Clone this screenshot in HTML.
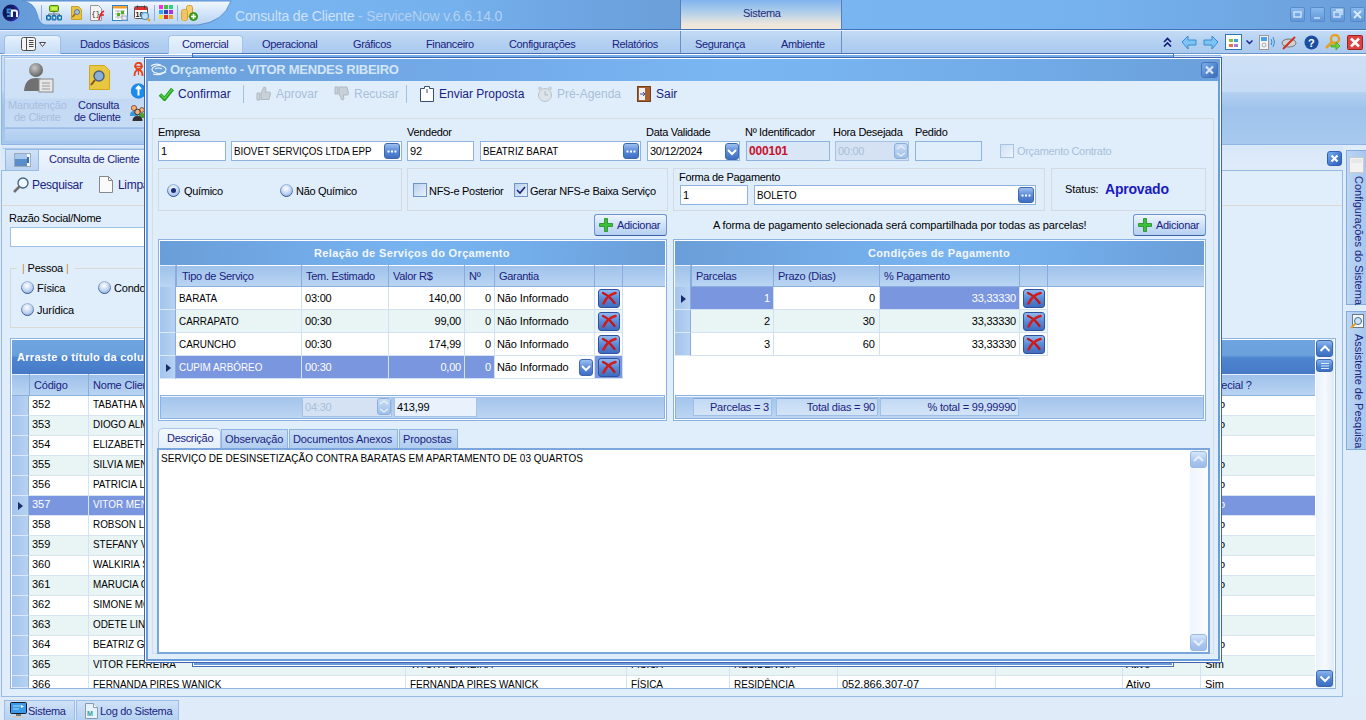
<!DOCTYPE html><html><head><meta charset="utf-8"><style>
*{box-sizing:border-box;margin:0;padding:0}
html,body{width:1366px;height:720px;overflow:hidden;background:#dfebf9;font-family:"Liberation Sans",sans-serif;font-size:11px;color:#000}
.a{position:absolute}
.t{position:absolute;white-space:nowrap;line-height:13px}
.nb{color:#19227e}
.up{letter-spacing:-0.6px}
.inp{position:absolute;background:#fff;border:1px solid #8db2e3}
.ell{position:absolute;width:16px;height:16px;border-radius:3px;background:linear-gradient(#8fb6ee,#4d7fd0 55%,#3a6cc0);border:1px solid #3f68b0}
.ell:after{content:"";position:absolute;left:3px;top:6px;width:2px;height:2px;background:#fff;box-shadow:3px 0 #fff,6px 0 #fff}
.grp{position:absolute;border:1px solid #d3dbe4}
.gh{position:absolute;background:linear-gradient(90deg,#6c9fd8 0%,#7ab6f0 45%,#78b3ee 60%,#6a9ed8 100%)}
.ch{position:absolute;background:linear-gradient(#9dc0ea,#b8d3f2);color:#19227e}
.ind{position:absolute;background:linear-gradient(90deg,#a8c7ee,#b6d1f2);border-bottom:1px solid #d8e6f6;border-right:1px solid #87abdc}
.del{position:absolute;width:22px;height:19px;border-radius:3px;background:linear-gradient(#7fa8e6,#4475c4);border:1px solid #3462ad}
.cell{position:absolute;white-space:nowrap;line-height:13px;overflow:hidden}
</style></head><body>
<div class="a" style="left:0px;top:0px;width:1366px;height:29px;background:linear-gradient(90deg,#6398d5 0%,#70aae8 10%,#78b5f1 17%,#75b1ed 33%,#6ea5e2 42%,#6a9fd9 49.8%,#78b5f1 61.6%,#76b2ee 80%,#6a9fdb 100%)"></div>
<div class="a" style="left:0px;top:29px;width:1366px;height:1px;background:#3f72b8"></div>
<div class="a" style="left:0px;top:30px;width:1366px;height:1px;background:#e9f2fc"></div>
<svg class="a" style="left:0;top:0" width="240" height="29"><defs><linearGradient id="qg" x1="0" y1="0" x2="0" y2="1"><stop offset="0" stop-color="#f2f8fe"/><stop offset="0.45" stop-color="#d6e7fa"/><stop offset="1" stop-color="#b6d3f4"/></linearGradient></defs><path d="M22 1 Q34 2 37 14 Q39 24 45 25 L198 25 Q224 22 231 1 Z" fill="url(#qg)" stroke="#5d8fd0" stroke-width="1"/></svg>
<svg class="a" style="left:2px;top:4px" width="18" height="18"><defs><radialGradient id="lg" cx="0.35" cy="0.45" r="0.65"><stop offset="0" stop-color="#0a1040"/><stop offset="0.7" stop-color="#161e70"/><stop offset="1" stop-color="#3a3ad0"/></radialGradient></defs><circle cx="9" cy="9" r="8.5" fill="url(#lg)"/><path d="M9 5.5H5.5v3h3v3.5H5" stroke="#3a8ad8" stroke-width="1.8" fill="none"/><path d="M10 13V6.5h3q2 0 2 2V13" stroke="#f4f4ff" stroke-width="2" fill="none"/></svg>
<div class="a" style="left:41px;top:5px;width:1px;height:16px;background:#8fb0da"></div>
<svg class="a" style="left:46px;top:5px" width="16" height="16" viewBox="0 0 16 16"><rect x="3.5" y="0.5" width="9" height="6" rx="1" fill="#a0d820" stroke="#4a8a10"/><rect x="5" y="2" width="6" height="3" fill="#c8f060"/><path d="M8 7v2M2.5 11V9h11v2M8 9v2" stroke="#707878" fill="none"/><rect x="0.5" y="10.5" width="4" height="4.5" rx="0.5" fill="#3a9ad8" stroke="#1a6aa8"/><rect x="6" y="10.5" width="4" height="4.5" rx="0.5" fill="#3a9ad8" stroke="#1a6aa8"/><rect x="11.5" y="10.5" width="4" height="4.5" rx="0.5" fill="#3a9ad8" stroke="#1a6aa8"/><rect x="2" y="12" width="1.5" height="1.5" fill="#fff"/><rect x="7.5" y="12" width="1.5" height="1.5" fill="#fff"/><rect x="13" y="12" width="1.5" height="1.5" fill="#fff"/></svg>
<svg class="a" style="left:71px;top:6px" width="11" height="14" viewBox="0 0 11 14"><path d="M0.5 0.5h7l3 3v10h-10z" fill="#e6c440" stroke="#c8a028"/><circle cx="6" cy="6" r="2.5" fill="#a8c0d8" stroke="#607890"/><path d="M4 8l-2.5 3" stroke="#a06020" stroke-width="1.5"/></svg>
<svg class="a" style="left:89px;top:5px" width="18" height="16" viewBox="0 0 18 16"><path d="M1.5 0.5h8l3 3v12h-11z" fill="#f4f4f4" stroke="#999"/><text x="2.5" y="11" font-size="7" fill="#222" font-family="Liberation Mono">{}</text><path d="M10 15 Q11 8 15 6M11 10h4" stroke="#e02020" stroke-width="1.6" fill="none"/></svg>
<svg class="a" style="left:112px;top:5px" width="16" height="16" viewBox="0 0 16 16"><rect x="0.5" y="0.5" width="15" height="15" fill="#fff" stroke="#2f86c8"/><rect x="1" y="1" width="14" height="2.5" fill="#f7a030"/><path d="M3 6h10M3 9h10M3 12h10M6 5v9M10 5v9" stroke="#b8b8b8"/><rect x="5" y="8" width="3" height="3" fill="#50b020"/><rect x="9" y="6" width="3" height="3" fill="#50b020"/><rect x="10" y="11" width="5" height="4" fill="#e8eef4" stroke="#9ab"/></svg>
<svg class="a" style="left:134px;top:5px" width="17" height="17" viewBox="0 0 17 17"><rect x="0.5" y="1.5" width="13" height="12" rx="1" fill="#fff" stroke="#555"/><rect x="1" y="2" width="12" height="3" fill="#e03030"/><path d="M3.5 0.5v3M10.5 0.5v3" stroke="#444"/><text x="1.5" y="12" font-size="7" fill="#111" font-family="Liberation Sans" font-weight="bold">10</text><circle cx="11" cy="11" r="3.5" fill="#bfe0f8" stroke="#4a90c8" stroke-width="1.2"/><path d="M13.5 13.5l2.5 2.5" stroke="#e8a020" stroke-width="2"/></svg>
<div class="a" style="left:154px;top:5px;width:1px;height:16px;background:#8fb0da"></div>
<svg class="a" style="left:159px;top:5px" width="14" height="14" viewBox="0 0 14 14"><rect x="0" y="0" width="4" height="4" fill="#f030e0"/><rect x="5" y="0" width="4" height="4" fill="#40c040"/><rect x="10" y="0" width="4" height="4" fill="#30d080"/><rect x="0" y="5" width="4" height="4" fill="#30a8f0"/><rect x="5" y="5" width="4" height="4" fill="#3040c0"/><rect x="10" y="5" width="4" height="4" fill="#b030e0"/><rect x="0" y="10" width="4" height="4" fill="#f0e020"/><rect x="5" y="10" width="4" height="4" fill="#e03030"/><rect x="10" y="10" width="4" height="4" fill="#f0a020"/></svg>
<div class="a" style="left:177px;top:5px;width:1px;height:16px;background:#8fb0da"></div>
<svg class="a" style="left:181px;top:5px" width="17" height="16" viewBox="0 0 17 16"><rect x="5.5" y="0.5" width="6" height="11" rx="2" fill="#f8d070" stroke="#d8a030"/><rect x="0.5" y="4.5" width="6" height="11" rx="2" fill="#f8d070" stroke="#d8a030"/><path d="M1 7h5M1 9h5M1 11h5M1 13h5" stroke="#e0b050" stroke-width="0.7"/><circle cx="12.5" cy="11.5" r="4" fill="#40a820" stroke="#2a7810" stroke-width="0.8"/><path d="M12.5 9v5M10 11.5h5" stroke="#fff" stroke-width="1.6"/></svg>
<div class="t" style="left:235px;top:8px;font-size:14px;line-height:16px;color:#cfe2f8;letter-spacing:-0.15px">Consulta de Cliente<span style='color:#b2d0f2'> - ServiceNow v.6.6.14.0</span></div>
<div class="a" style="left:680px;top:0px;width:162px;height:29px;background:linear-gradient(#80b4ee 0%,#b4d0ea 45%,#e8e4dc 80%,#f5e8d8 100%);border-left:1px solid #5a7fb8;border-right:1px solid #5a7fb8"></div>
<div class="t" style="left:743px;top:7px;color:#1e2a7a;letter-spacing:-0.3px">Sistema</div>
<div class="a" style="left:1290px;top:7px;width:15px;height:15px;border-radius:2px;background:linear-gradient(#8dbdf2,#5f96d8);border:1px solid #5886c6;opacity:0.85"></div>
<div class="a" style="left:1310px;top:7px;width:15px;height:15px;border-radius:2px;background:linear-gradient(#8dbdf2,#5f96d8);border:1px solid #5886c6;opacity:0.85"></div>
<div class="a" style="left:1330px;top:7px;width:15px;height:15px;border-radius:2px;background:linear-gradient(#8dbdf2,#5f96d8);border:1px solid #5886c6;opacity:0.85"></div>
<div class="a" style="left:1350px;top:7px;width:15px;height:15px;border-radius:2px;background:linear-gradient(#8dbdf2,#5f96d8);border:1px solid #5886c6;opacity:0.85"></div>
<svg class="a" style="left:1290px;top:7px" width="75" height="15"><g stroke="#dbe9fa" stroke-width="1.3" fill="none"><rect x="4" y="5" width="7" height="5"/><path d="M24 11h6"/><rect x="44" y="5" width="6" height="5"/><path d="M46 3h6v5"/><path d="M64 4l7 7M71 4l-7 7" stroke-width="1.8"/></g></svg>
<div class="a" style="left:0px;top:31px;width:1366px;height:23px;background:linear-gradient(#c4dbf5 0%,#b3d0f1 50%,#a9c9ee 100%)"></div>
<div class="a" style="left:0px;top:53px;width:1366px;height:1px;background:#6a96d0"></div>
<div class="a" style="left:4px;top:35px;width:57px;height:19px;border-radius:4px 4px 0 0;background:linear-gradient(#e6f1fc,#c6ddf6);border:1px solid #9ebfe8;border-bottom:none"></div>
<svg class="a" style="left:21px;top:37px" width="16" height="14" viewBox="0 0 16 14"><rect x="0.5" y="0.5" width="14" height="13" rx="2" fill="#f4f4f4" stroke="#505050"/><path d="M5.5 1v12" stroke="#505050"/><path d="M8 3.5h4.5M8 5.5h4.5M8 7.5h4.5M8 9.5h4.5" stroke="#333" stroke-width="0.9"/></svg>
<svg class="a" style="left:39px;top:42px" width="7" height="5" viewBox="0 0 7 5"><path d="M0.5 0.5h6l-3 4z" fill="#fff" stroke="#445"/></svg>
<div class="a" style="left:168px;top:35px;width:75px;height:20px;border-radius:4px 4px 0 0;background:linear-gradient(#e8f2fc,#d3e5f8);border:1px solid #a4c3ea;border-bottom:none"></div>
<div class="t" style="left:80px;top:38px;color:#19227e;letter-spacing:-0.35px">Dados Básicos</div>
<div class="t" style="left:182px;top:38px;color:#19227e;letter-spacing:-0.35px">Comercial</div>
<div class="t" style="left:262px;top:38px;color:#19227e;letter-spacing:-0.35px">Operacional</div>
<div class="t" style="left:353px;top:38px;color:#19227e;letter-spacing:-0.35px">Gráficos</div>
<div class="t" style="left:426px;top:38px;color:#19227e;letter-spacing:-0.35px">Financeiro</div>
<div class="t" style="left:509px;top:38px;color:#19227e;letter-spacing:-0.35px">Configurações</div>
<div class="t" style="left:612px;top:38px;color:#19227e;letter-spacing:-0.35px">Relatórios</div>
<div class="t" style="left:695px;top:38px;color:#19227e;letter-spacing:-0.35px">Segurança</div>
<div class="t" style="left:781px;top:38px;color:#19227e;letter-spacing:-0.35px">Ambiente</div>
<div class="a" style="left:680px;top:31px;width:1px;height:22px;background:#6b8fc4"></div>
<div class="a" style="left:841px;top:31px;width:1px;height:22px;background:#6b8fc4"></div>
<svg class="a" style="left:1163px;top:37px" width="9" height="10" viewBox="0 0 9 10"><path d="M1 5l3.5-3.5L8 5M1 9.5L4.5 6 8 9.5" stroke="#101a7a" stroke-width="1.6" fill="none"/></svg>
<svg class="a" style="left:1181px;top:35px" width="16" height="15" viewBox="0 0 16 15"><path d="M1 7l6-6v4h8v5H7v4z" fill="#7cc4f4" stroke="#3a8ad0"/></svg>
<svg class="a" style="left:1203px;top:35px" width="16" height="15" viewBox="0 0 16 15"><path d="M15 7l-6-6v4H1v5h8v4z" fill="#7cc4f4" stroke="#3a8ad0"/></svg>
<svg class="a" style="left:1225px;top:34px" width="17" height="16" viewBox="0 0 17 16"><rect x="0.5" y="0.5" width="16" height="15" fill="#fff" stroke="#2c78b8"/><rect x="4" y="5" width="4" height="3" fill="#8ac040"/><rect x="9" y="5" width="4" height="3" fill="#40a0e0"/><rect x="4" y="10" width="4" height="3" fill="#f07040"/><rect x="9" y="10" width="4" height="3" fill="#a080e0"/></svg>
<svg class="a" style="left:1246px;top:40px" width="7" height="5" viewBox="0 0 7 5"><path d="M0.5 0.5l3 3 3-3" stroke="#1a2a8a" stroke-width="1.5" fill="none"/></svg>
<svg class="a" style="left:1259px;top:35px" width="17" height="15" viewBox="0 0 17 15"><rect x="0.5" y="0.5" width="9" height="14" fill="#f4f4f4" stroke="#999"/><rect x="2" y="2" width="6" height="4" fill="#4aa0f0"/><circle cx="5" cy="10" r="2" fill="none" stroke="#aaa"/><path d="M12 4q2 3 0 6M14 2q3 5 0 10" stroke="#3a8ad0" fill="none"/></svg>
<svg class="a" style="left:1281px;top:36px" width="16" height="14" viewBox="0 0 16 14"><ellipse cx="8" cy="7" rx="7" ry="4" fill="#d0d0d0" stroke="#777"/><path d="M2 13L14 1" stroke="#d03020" stroke-width="2"/></svg>
<svg class="a" style="left:1304px;top:35px" width="15" height="15" viewBox="0 0 15 15"><circle cx="7.5" cy="7.5" r="7" fill="#1c4ea0"/><text x="4" y="12" font-size="11" font-weight="bold" fill="#fff" font-family="Liberation Sans">?</text></svg>
<svg class="a" style="left:1325px;top:34px" width="16" height="16" viewBox="0 0 16 16"><circle cx="10" cy="5" r="4" fill="none" stroke="#e8a020" stroke-width="2.5"/><path d="M7 8l-6 6" stroke="#e8a020" stroke-width="2.5"/><path d="M6 11h5V8l4 4-4 4v-3H6z" fill="#70d030" stroke="#40a010" stroke-width="0.7"/></svg>
<svg class="a" style="left:1347px;top:35px" width="16" height="15" viewBox="0 0 16 15"><rect x="0.5" y="0.5" width="15" height="14" rx="1" fill="#e04040" stroke="#a02020"/><path d="M4 3.5l8 8M12 3.5l-8 8" stroke="#fff" stroke-width="2.5"/></svg>
<div class="a" style="left:0px;top:54px;width:1366px;height:92px;background:#dfebf9"></div>
<div class="a" style="left:0px;top:54px;width:1366px;height:1px;background:#fff"></div>
<div class="a" style="left:1px;top:55px;width:1365px;height:90px;background:linear-gradient(#cde0f6 0%,#c6dbf4 40%,#b2cff1 42%,#a8c9ee 52%,#9fc3ec 60%,#a7c9ee 100%);border:1px solid #8db4e4;border-right:none"></div>
<div class="a" style="left:4px;top:57px;width:600px;height:71px;background:linear-gradient(#d2e3f7 0%,#cde0f6 58%,#c3d9f3 60%,#c6dbf4 100%);border:1px solid #a6c5ec;border-right:none"></div>
<div class="a" style="left:5px;top:58px;width:599px;height:1px;background:#f2f8fe"></div>
<div class="a" style="left:4px;top:128px;width:600px;height:14px;background:linear-gradient(#bcd5f2,#b0cef0);border:1px solid #a6c5ec;border-top:1px solid #9cbde8;border-right:none"></div>
<div class="a" style="left:1221px;top:55px;width:145px;height:1px;background:#f4f8fd"></div>
<svg class="a" style="left:24px;top:62px" width="30" height="31" viewBox="0 0 30 31"><defs><radialGradient id="hd" cx="0.4" cy="0.35" r="0.6"><stop offset="0" stop-color="#c8c8c8"/><stop offset="1" stop-color="#6a6a6a"/></radialGradient></defs><circle cx="12" cy="8" r="7" fill="url(#hd)"/><path d="M0 29 Q1 16 12 16 Q22 16 24 24 L24 29z" fill="#707070"/><rect x="15" y="17" width="14" height="13" fill="#e6e6e6" stroke="#8a8a8a"/><path d="M18 21h8M18 24h8M18 27h8" stroke="#9a9a9a"/></svg>
<div class="t" style="left:8px;top:99px;color:#a8bedf;letter-spacing:-0.2px">Manutenção</div>
<div class="t" style="left:14px;top:111px;color:#a8bedf;letter-spacing:-0.3px">de Cliente</div>
<svg class="a" style="left:89px;top:65px" width="21" height="25" viewBox="0 0 21 25"><path d="M0.5 0.5h15l5 5v19h-20z" fill="#e8c840" stroke="#d0a820"/><circle cx="10" cy="11" r="5" fill="#8ab0d8" stroke="#506080" stroke-width="1.5"/><path d="M6 15l-4 5" stroke="#805020" stroke-width="2"/></svg>
<div class="t" style="left:78px;top:99px;color:#19227e;letter-spacing:-0.3px">Consulta</div>
<div class="t" style="left:74px;top:111px;color:#19227e;letter-spacing:-0.3px">de Cliente</div>
<svg class="a" style="left:133px;top:62px" width="11" height="15" viewBox="0 0 11 15"><circle cx="5.5" cy="4" r="3.2" fill="none" stroke="#e8401a" stroke-width="1.8"/><path d="M1 4.5h9" stroke="#e8401a" stroke-width="1.5"/><path d="M1.5 14q0-6 4-6t4 6" fill="none" stroke="#e8401a" stroke-width="1.8"/><path d="M5.5 9v4" stroke="#e8401a" stroke-width="1.2"/></svg>
<svg class="a" style="left:131px;top:83px" width="15" height="16" viewBox="0 0 15 16"><circle cx="7.5" cy="8" r="7.3" fill="#1a8cf0" stroke="#0a6ad0" stroke-width="0.6"/><path d="M7.5 3.5v9M5 6l2.5-2.5L10 6" stroke="#fff" stroke-width="2" fill="none"/></svg>
<svg class="a" style="left:129px;top:104px" width="17" height="18" viewBox="0 0 17 18"><circle cx="5" cy="4" r="2.6" fill="#f0b080" stroke="#8a3a20" stroke-width="0.8"/><path d="M1 11q0-4 4-4t4 4v1H1z" fill="#3a9ad8"/><circle cx="13" cy="6" r="2.4" fill="#f0b080" stroke="#6a4a20" stroke-width="0.8"/><path d="M9.5 13q0-4 3.5-4t3.5 4v1h-7z" fill="#50a030"/><circle cx="8.5" cy="8" r="2.8" fill="#f0b080" stroke="#2a2a2a" stroke-width="0.9"/><path d="M3.5 17q0-5 5-5t5 5z" fill="#303030"/></svg>
<div class="a" style="left:1px;top:146px;width:1342px;height:24px;background:linear-gradient(#d8e7f8,#dfebf9)"></div>
<div class="a" style="left:3px;top:148px;width:400px;height:1px;background:linear-gradient(90deg,#a8c7ec,#c8dcf4 60%,#dfedfb)"></div>
<div class="a" style="left:5px;top:149px;width:34px;height:22px;background:linear-gradient(#cfe1f6,#b9d3f1);border:1px solid #98bbe6"></div>
<svg class="a" style="left:14px;top:153px" width="17" height="14" viewBox="0 0 17 14"><rect x="0.5" y="0.5" width="16" height="13" fill="#f4f8fc" stroke="#9ab"/><rect x="1" y="1" width="12" height="12" fill="#5a8ec8"/><rect x="1" y="1" width="12" height="5" fill="#a9c8ea"/><rect x="13" y="4" width="2" height="6" fill="#3a6ea8"/></svg>
<div class="a" style="left:39px;top:149px;width:105px;height:22px;background:linear-gradient(#eef5fd,#e3eefb);border-top:1px solid #98bbe6"></div>
<div class="t" style="left:49px;top:153px;color:#19227e;letter-spacing:-0.3px">Consulta de Cliente</div>
<div class="a" style="left:1px;top:170px;width:1342px;height:527px;background:#e0eefc;border:1px solid #98bbe6"></div>
<div class="a" style="left:39px;top:170px;width:105px;height:1px;background:#e0eefc"></div>
<div class="a" style="left:1327px;top:151px;width:15px;height:15px;border-radius:3px;background:linear-gradient(135deg,#7ab0f0,#4a80d8 50%,#2f60b8);border:1px solid #3060b0"></div>
<svg class="a" style="left:1327px;top:151px" width="15" height="15" viewBox="0 0 15 15"><path d="M4.5 4.5l6 6M10.5 4.5l-6 6" stroke="#fff" stroke-width="2.2"/></svg>
<svg class="a" style="left:13px;top:177px" width="16" height="17" viewBox="0 0 16 17"><circle cx="10" cy="6" r="5" fill="#eef6ff" stroke="#406080" stroke-width="1.3"/><path d="M6.5 9.5L1 15" stroke="#707070" stroke-width="2.5"/></svg>
<div class="t" style="left:32px;top:179px;color:#19227e;font-size:12px;letter-spacing:-0.3px">Pesquisar</div>
<svg class="a" style="left:99px;top:176px" width="14" height="17" viewBox="0 0 14 17"><path d="M0.5 0.5h9l4 4v12h-13z" fill="#fafafa" stroke="#888"/><path d="M9.5 0.5v4h4" fill="none" stroke="#888"/></svg>
<div class="t" style="left:118px;top:179px;color:#19227e;font-size:12px;letter-spacing:-0.3px">Limpar</div>
<div class="a" style="left:2px;top:205px;width:1340px;height:1px;background:#dcd8d4"></div>
<div class="t" style="left:9px;top:212px;letter-spacing:-0.3px">Razão Social/Nome</div>
<div class="a" style="left:10px;top:227px;width:200px;height:20px;background:#fff;border:1px solid #a0bfe6"></div>
<div class="a" style="left:10px;top:268px;width:200px;height:60px;border:1px solid #d8d8d4;border-top:none"></div>
<div class="a" style="left:10px;top:268px;width:7px;height:1px;background:#d8d8d4"></div>
<div class="a" style="left:75px;top:268px;width:135px;height:1px;background:#d8d8d4"></div>
<div class="t" style="left:22px;top:262px;color:#000;letter-spacing:-0.2px"><span style='color:#d08a30'>|</span> Pessoa <span style='color:#d08a30'>|</span></div>
<svg class="a" style="left:21px;top:281px" width="14" height="14" viewBox="0 0 14 14"><defs><radialGradient id="rg21281" cx="0.45" cy="0.35" r="0.7"><stop offset="0" stop-color="#ffffff"/><stop offset="0.55" stop-color="#c4d8f2"/><stop offset="1" stop-color="#90b0e0"/></radialGradient><linearGradient id="rs21281" x1="0" y1="0" x2="0" y2="1"><stop offset="0" stop-color="#9ab6dc"/><stop offset="1" stop-color="#34508c"/></linearGradient></defs><circle cx="6.5" cy="6.5" r="6" fill="url(#rg21281)" stroke="url(#rs21281)"/></svg>
<div class="t" style="left:37px;top:282px;color:#000;letter-spacing:-0.2px">Física</div>
<svg class="a" style="left:98px;top:281px" width="14" height="14" viewBox="0 0 14 14"><defs><radialGradient id="rg98281" cx="0.45" cy="0.35" r="0.7"><stop offset="0" stop-color="#ffffff"/><stop offset="0.55" stop-color="#c4d8f2"/><stop offset="1" stop-color="#90b0e0"/></radialGradient><linearGradient id="rs98281" x1="0" y1="0" x2="0" y2="1"><stop offset="0" stop-color="#9ab6dc"/><stop offset="1" stop-color="#34508c"/></linearGradient></defs><circle cx="6.5" cy="6.5" r="6" fill="url(#rg98281)" stroke="url(#rs98281)"/></svg>
<div class="t" style="left:114px;top:282px;color:#000;letter-spacing:-0.2px">Condomínio</div>
<svg class="a" style="left:21px;top:303px" width="14" height="14" viewBox="0 0 14 14"><defs><radialGradient id="rg21303" cx="0.45" cy="0.35" r="0.7"><stop offset="0" stop-color="#ffffff"/><stop offset="0.55" stop-color="#c4d8f2"/><stop offset="1" stop-color="#90b0e0"/></radialGradient><linearGradient id="rs21303" x1="0" y1="0" x2="0" y2="1"><stop offset="0" stop-color="#9ab6dc"/><stop offset="1" stop-color="#34508c"/></linearGradient></defs><circle cx="6.5" cy="6.5" r="6" fill="url(#rg21303)" stroke="url(#rs21303)"/></svg>
<div class="t" style="left:37px;top:304px;color:#000;letter-spacing:-0.2px">Jurídica</div>
<div class="a" style="left:10px;top:338px;width:1326px;height:351px;background:#fff;border:1px solid #90b4e0"></div>
<div class="a" style="left:11px;top:339px;width:1305px;height:35px;background:linear-gradient(#6ea5e0 0%,#6aa0dc 45%,#4f86d0 52%,#4679c6 100%);border:1px solid #fff;border-bottom:none"></div>
<div class="t" style="left:17px;top:351px;color:#fff;font-weight:bold;font-size:11px;letter-spacing:0.3px">Arraste o título da coluna aqui para agrupar</div>
<div class="a" style="left:12px;top:374px;width:1303px;height:22px;background:linear-gradient(#9ec1ea,#b9d4f2);border-top:1px solid #e6effa;border-bottom:1px solid #8cb0de"></div>
<div class="a" style="left:29px;top:374px;width:1px;height:22px;background:#88acdc"></div>
<div class="a" style="left:88px;top:374px;width:1px;height:22px;background:#88acdc"></div>
<div class="a" style="left:405px;top:374px;width:1px;height:22px;background:#88acdc"></div>
<div class="a" style="left:626px;top:374px;width:1px;height:22px;background:#88acdc"></div>
<div class="a" style="left:729px;top:374px;width:1px;height:22px;background:#88acdc"></div>
<div class="a" style="left:837px;top:374px;width:1px;height:22px;background:#88acdc"></div>
<div class="a" style="left:995px;top:374px;width:1px;height:22px;background:#88acdc"></div>
<div class="a" style="left:1122px;top:374px;width:1px;height:22px;background:#88acdc"></div>
<div class="a" style="left:1200px;top:374px;width:1px;height:22px;background:#88acdc"></div>
<div class="t" style="left:34px;top:379px;color:#19227e;letter-spacing:-0.2px">Código</div>
<div class="t" style="left:93px;top:379px;color:#19227e;letter-spacing:-0.2px">Nome Cliente</div>
<div class="t" style="left:410px;top:379px;color:#19227e;letter-spacing:-0.2px">Nome Fantasia</div>
<div class="t" style="left:631px;top:379px;color:#19227e;letter-spacing:-0.2px">Pessoa</div>
<div class="t" style="left:734px;top:379px;color:#19227e;letter-spacing:-0.2px">Tipo</div>
<div class="t" style="left:842px;top:379px;color:#19227e;letter-spacing:-0.2px">CPF/CNPJ</div>
<div class="t" style="left:1000px;top:379px;color:#19227e;letter-spacing:-0.2px">Telefone</div>
<div class="t" style="left:1127px;top:379px;color:#19227e;letter-spacing:-0.2px">Situação</div>
<div class="t" style="left:1203px;top:379px;color:#19227e;letter-spacing:-0.2px">Especial ?</div>
<div class="a" style="left:29px;top:396px;width:1286px;height:20px;background:#ffffff"></div>
<div class="a" style="left:29px;top:415px;width:1286px;height:1px;background:#d7e5f3"></div>
<div class="a" style="left:12px;top:396px;width:17px;height:20px;background:linear-gradient(90deg,#a3c4ec,#b7d2f2);border-bottom:1px solid #dce8f7;border-right:1px solid #8aaedd"></div>
<div class="a" style="left:88px;top:396px;width:1px;height:20px;background:#d4e3f3"></div>
<div class="a" style="left:405px;top:396px;width:1px;height:20px;background:#d4e3f3"></div>
<div class="a" style="left:626px;top:396px;width:1px;height:20px;background:#d4e3f3"></div>
<div class="a" style="left:729px;top:396px;width:1px;height:20px;background:#d4e3f3"></div>
<div class="a" style="left:837px;top:396px;width:1px;height:20px;background:#d4e3f3"></div>
<div class="a" style="left:995px;top:396px;width:1px;height:20px;background:#d4e3f3"></div>
<div class="a" style="left:1122px;top:396px;width:1px;height:20px;background:#d4e3f3"></div>
<div class="a" style="left:1200px;top:396px;width:1px;height:20px;background:#d4e3f3"></div>
<div class="a" style="left:29px;top:396px;width:1286px;height:20px;overflow:hidden">
<div class="t" style="left:3px;top:2px;color:#000">352</div>
<div class="t" style="left:64px;top:2px;transform:scaleX(0.9);transform-origin:0 0;color:#000">TABATHA MARQUES</div>
<div class="t" style="left:381px;top:2px;transform:scaleX(0.9);transform-origin:0 0;color:#000">TABATHA MARQUES</div>
<div class="t" style="left:602px;top:2px;transform:scaleX(0.9);transform-origin:0 0;color:#000">FÍSICA</div>
<div class="t" style="left:705px;top:2px;transform:scaleX(0.9);transform-origin:0 0;color:#000">RESIDÊNCIA</div>
<div class="t" style="left:813px;top:2px;color:#000">052.866.307-07</div>
<div class="t" style="left:1097px;top:2px;color:#000">Ativo</div>
<div class="t" style="left:1176px;top:2px;color:#000">Não</div>
</div>
<div class="a" style="left:29px;top:416px;width:1286px;height:20px;background:#e9f4f4"></div>
<div class="a" style="left:29px;top:435px;width:1286px;height:1px;background:#d7e5f3"></div>
<div class="a" style="left:12px;top:416px;width:17px;height:20px;background:linear-gradient(90deg,#a3c4ec,#b7d2f2);border-bottom:1px solid #dce8f7;border-right:1px solid #8aaedd"></div>
<div class="a" style="left:88px;top:416px;width:1px;height:20px;background:#d4e3f3"></div>
<div class="a" style="left:405px;top:416px;width:1px;height:20px;background:#d4e3f3"></div>
<div class="a" style="left:626px;top:416px;width:1px;height:20px;background:#d4e3f3"></div>
<div class="a" style="left:729px;top:416px;width:1px;height:20px;background:#d4e3f3"></div>
<div class="a" style="left:837px;top:416px;width:1px;height:20px;background:#d4e3f3"></div>
<div class="a" style="left:995px;top:416px;width:1px;height:20px;background:#d4e3f3"></div>
<div class="a" style="left:1122px;top:416px;width:1px;height:20px;background:#d4e3f3"></div>
<div class="a" style="left:1200px;top:416px;width:1px;height:20px;background:#d4e3f3"></div>
<div class="a" style="left:29px;top:416px;width:1286px;height:20px;overflow:hidden">
<div class="t" style="left:3px;top:2px;color:#000">353</div>
<div class="t" style="left:64px;top:2px;transform:scaleX(0.9);transform-origin:0 0;color:#000">DIOGO ALMEIDA</div>
<div class="t" style="left:381px;top:2px;transform:scaleX(0.9);transform-origin:0 0;color:#000">DIOGO ALMEIDA</div>
<div class="t" style="left:602px;top:2px;transform:scaleX(0.9);transform-origin:0 0;color:#000">FÍSICA</div>
<div class="t" style="left:705px;top:2px;transform:scaleX(0.9);transform-origin:0 0;color:#000">RESIDÊNCIA</div>
<div class="t" style="left:813px;top:2px;color:#000">052.866.307-07</div>
<div class="t" style="left:1097px;top:2px;color:#000">Ativo</div>
<div class="t" style="left:1176px;top:2px;color:#000">Não</div>
</div>
<div class="a" style="left:29px;top:436px;width:1286px;height:20px;background:#ffffff"></div>
<div class="a" style="left:29px;top:455px;width:1286px;height:1px;background:#d7e5f3"></div>
<div class="a" style="left:12px;top:436px;width:17px;height:20px;background:linear-gradient(90deg,#a3c4ec,#b7d2f2);border-bottom:1px solid #dce8f7;border-right:1px solid #8aaedd"></div>
<div class="a" style="left:88px;top:436px;width:1px;height:20px;background:#d4e3f3"></div>
<div class="a" style="left:405px;top:436px;width:1px;height:20px;background:#d4e3f3"></div>
<div class="a" style="left:626px;top:436px;width:1px;height:20px;background:#d4e3f3"></div>
<div class="a" style="left:729px;top:436px;width:1px;height:20px;background:#d4e3f3"></div>
<div class="a" style="left:837px;top:436px;width:1px;height:20px;background:#d4e3f3"></div>
<div class="a" style="left:995px;top:436px;width:1px;height:20px;background:#d4e3f3"></div>
<div class="a" style="left:1122px;top:436px;width:1px;height:20px;background:#d4e3f3"></div>
<div class="a" style="left:1200px;top:436px;width:1px;height:20px;background:#d4e3f3"></div>
<div class="a" style="left:29px;top:436px;width:1286px;height:20px;overflow:hidden">
<div class="t" style="left:3px;top:2px;color:#000">354</div>
<div class="t" style="left:64px;top:2px;transform:scaleX(0.9);transform-origin:0 0;color:#000">ELIZABETH SOUZA</div>
<div class="t" style="left:381px;top:2px;transform:scaleX(0.9);transform-origin:0 0;color:#000">ELIZABETH SOUZA</div>
<div class="t" style="left:602px;top:2px;transform:scaleX(0.9);transform-origin:0 0;color:#000">FÍSICA</div>
<div class="t" style="left:705px;top:2px;transform:scaleX(0.9);transform-origin:0 0;color:#000">RESIDÊNCIA</div>
<div class="t" style="left:813px;top:2px;color:#000">052.866.307-07</div>
<div class="t" style="left:1097px;top:2px;color:#000">Ativo</div>
<div class="t" style="left:1176px;top:2px;color:#000"></div>
</div>
<div class="a" style="left:29px;top:456px;width:1286px;height:20px;background:#e9f4f4"></div>
<div class="a" style="left:29px;top:475px;width:1286px;height:1px;background:#d7e5f3"></div>
<div class="a" style="left:12px;top:456px;width:17px;height:20px;background:linear-gradient(90deg,#a3c4ec,#b7d2f2);border-bottom:1px solid #dce8f7;border-right:1px solid #8aaedd"></div>
<div class="a" style="left:88px;top:456px;width:1px;height:20px;background:#d4e3f3"></div>
<div class="a" style="left:405px;top:456px;width:1px;height:20px;background:#d4e3f3"></div>
<div class="a" style="left:626px;top:456px;width:1px;height:20px;background:#d4e3f3"></div>
<div class="a" style="left:729px;top:456px;width:1px;height:20px;background:#d4e3f3"></div>
<div class="a" style="left:837px;top:456px;width:1px;height:20px;background:#d4e3f3"></div>
<div class="a" style="left:995px;top:456px;width:1px;height:20px;background:#d4e3f3"></div>
<div class="a" style="left:1122px;top:456px;width:1px;height:20px;background:#d4e3f3"></div>
<div class="a" style="left:1200px;top:456px;width:1px;height:20px;background:#d4e3f3"></div>
<div class="a" style="left:29px;top:456px;width:1286px;height:20px;overflow:hidden">
<div class="t" style="left:3px;top:2px;color:#000">355</div>
<div class="t" style="left:64px;top:2px;transform:scaleX(0.9);transform-origin:0 0;color:#000">SILVIA MENDES</div>
<div class="t" style="left:381px;top:2px;transform:scaleX(0.9);transform-origin:0 0;color:#000">SILVIA MENDES</div>
<div class="t" style="left:602px;top:2px;transform:scaleX(0.9);transform-origin:0 0;color:#000">FÍSICA</div>
<div class="t" style="left:705px;top:2px;transform:scaleX(0.9);transform-origin:0 0;color:#000">RESIDÊNCIA</div>
<div class="t" style="left:813px;top:2px;color:#000">052.866.307-07</div>
<div class="t" style="left:1097px;top:2px;color:#000">Ativo</div>
<div class="t" style="left:1176px;top:2px;color:#000">Não</div>
</div>
<div class="a" style="left:29px;top:476px;width:1286px;height:20px;background:#ffffff"></div>
<div class="a" style="left:29px;top:495px;width:1286px;height:1px;background:#d7e5f3"></div>
<div class="a" style="left:12px;top:476px;width:17px;height:20px;background:linear-gradient(90deg,#a3c4ec,#b7d2f2);border-bottom:1px solid #dce8f7;border-right:1px solid #8aaedd"></div>
<div class="a" style="left:88px;top:476px;width:1px;height:20px;background:#d4e3f3"></div>
<div class="a" style="left:405px;top:476px;width:1px;height:20px;background:#d4e3f3"></div>
<div class="a" style="left:626px;top:476px;width:1px;height:20px;background:#d4e3f3"></div>
<div class="a" style="left:729px;top:476px;width:1px;height:20px;background:#d4e3f3"></div>
<div class="a" style="left:837px;top:476px;width:1px;height:20px;background:#d4e3f3"></div>
<div class="a" style="left:995px;top:476px;width:1px;height:20px;background:#d4e3f3"></div>
<div class="a" style="left:1122px;top:476px;width:1px;height:20px;background:#d4e3f3"></div>
<div class="a" style="left:1200px;top:476px;width:1px;height:20px;background:#d4e3f3"></div>
<div class="a" style="left:29px;top:476px;width:1286px;height:20px;overflow:hidden">
<div class="t" style="left:3px;top:2px;color:#000">356</div>
<div class="t" style="left:64px;top:2px;transform:scaleX(0.9);transform-origin:0 0;color:#000">PATRICIA LIMA</div>
<div class="t" style="left:381px;top:2px;transform:scaleX(0.9);transform-origin:0 0;color:#000">PATRICIA LIMA</div>
<div class="t" style="left:602px;top:2px;transform:scaleX(0.9);transform-origin:0 0;color:#000">FÍSICA</div>
<div class="t" style="left:705px;top:2px;transform:scaleX(0.9);transform-origin:0 0;color:#000">RESIDÊNCIA</div>
<div class="t" style="left:813px;top:2px;color:#000">052.866.307-07</div>
<div class="t" style="left:1097px;top:2px;color:#000">Ativo</div>
<div class="t" style="left:1176px;top:2px;color:#000">Não</div>
</div>
<div class="a" style="left:29px;top:496px;width:1286px;height:20px;background:#7a96de"></div>
<div class="a" style="left:29px;top:515px;width:1286px;height:1px;background:#d7e5f3"></div>
<div class="a" style="left:12px;top:496px;width:17px;height:20px;background:linear-gradient(90deg,#a3c4ec,#b7d2f2);border-bottom:1px solid #dce8f7;border-right:1px solid #8aaedd"></div>
<div class="a" style="left:88px;top:496px;width:1px;height:20px;background:#d4e3f3"></div>
<div class="a" style="left:405px;top:496px;width:1px;height:20px;background:#d4e3f3"></div>
<div class="a" style="left:626px;top:496px;width:1px;height:20px;background:#d4e3f3"></div>
<div class="a" style="left:729px;top:496px;width:1px;height:20px;background:#d4e3f3"></div>
<div class="a" style="left:837px;top:496px;width:1px;height:20px;background:#d4e3f3"></div>
<div class="a" style="left:995px;top:496px;width:1px;height:20px;background:#d4e3f3"></div>
<div class="a" style="left:1122px;top:496px;width:1px;height:20px;background:#d4e3f3"></div>
<div class="a" style="left:1200px;top:496px;width:1px;height:20px;background:#d4e3f3"></div>
<div class="a" style="left:29px;top:496px;width:1286px;height:20px;overflow:hidden">
<div class="t" style="left:3px;top:2px;color:#fff">357</div>
<div class="t" style="left:64px;top:2px;transform:scaleX(0.9);transform-origin:0 0;color:#fff">VITOR MENDES RIBEIRO</div>
<div class="t" style="left:381px;top:2px;transform:scaleX(0.9);transform-origin:0 0;color:#fff">VITOR MENDES RIBEIRO</div>
<div class="t" style="left:602px;top:2px;transform:scaleX(0.9);transform-origin:0 0;color:#fff">FÍSICA</div>
<div class="t" style="left:705px;top:2px;transform:scaleX(0.9);transform-origin:0 0;color:#fff">RESIDÊNCIA</div>
<div class="t" style="left:813px;top:2px;color:#fff">052.866.307-07</div>
<div class="t" style="left:1097px;top:2px;color:#fff">Ativo</div>
<div class="t" style="left:1176px;top:2px;color:#fff">Não</div>
</div>
<svg class="a" style="left:18px;top:502px" width="5" height="8" viewBox="0 0 5 8"><path d="M0 0l5 4-5 4z" fill="#1a2a6a"/></svg>
<div class="a" style="left:29px;top:516px;width:1286px;height:20px;background:#ffffff"></div>
<div class="a" style="left:29px;top:535px;width:1286px;height:1px;background:#d7e5f3"></div>
<div class="a" style="left:12px;top:516px;width:17px;height:20px;background:linear-gradient(90deg,#a3c4ec,#b7d2f2);border-bottom:1px solid #dce8f7;border-right:1px solid #8aaedd"></div>
<div class="a" style="left:88px;top:516px;width:1px;height:20px;background:#d4e3f3"></div>
<div class="a" style="left:405px;top:516px;width:1px;height:20px;background:#d4e3f3"></div>
<div class="a" style="left:626px;top:516px;width:1px;height:20px;background:#d4e3f3"></div>
<div class="a" style="left:729px;top:516px;width:1px;height:20px;background:#d4e3f3"></div>
<div class="a" style="left:837px;top:516px;width:1px;height:20px;background:#d4e3f3"></div>
<div class="a" style="left:995px;top:516px;width:1px;height:20px;background:#d4e3f3"></div>
<div class="a" style="left:1122px;top:516px;width:1px;height:20px;background:#d4e3f3"></div>
<div class="a" style="left:1200px;top:516px;width:1px;height:20px;background:#d4e3f3"></div>
<div class="a" style="left:29px;top:516px;width:1286px;height:20px;overflow:hidden">
<div class="t" style="left:3px;top:2px;color:#000">358</div>
<div class="t" style="left:64px;top:2px;transform:scaleX(0.9);transform-origin:0 0;color:#000">ROBSON LOPES</div>
<div class="t" style="left:381px;top:2px;transform:scaleX(0.9);transform-origin:0 0;color:#000">ROBSON LOPES</div>
<div class="t" style="left:602px;top:2px;transform:scaleX(0.9);transform-origin:0 0;color:#000">FÍSICA</div>
<div class="t" style="left:705px;top:2px;transform:scaleX(0.9);transform-origin:0 0;color:#000">RESIDÊNCIA</div>
<div class="t" style="left:813px;top:2px;color:#000">052.866.307-07</div>
<div class="t" style="left:1097px;top:2px;color:#000">Ativo</div>
<div class="t" style="left:1176px;top:2px;color:#000">Não</div>
</div>
<div class="a" style="left:29px;top:536px;width:1286px;height:20px;background:#e9f4f4"></div>
<div class="a" style="left:29px;top:555px;width:1286px;height:1px;background:#d7e5f3"></div>
<div class="a" style="left:12px;top:536px;width:17px;height:20px;background:linear-gradient(90deg,#a3c4ec,#b7d2f2);border-bottom:1px solid #dce8f7;border-right:1px solid #8aaedd"></div>
<div class="a" style="left:88px;top:536px;width:1px;height:20px;background:#d4e3f3"></div>
<div class="a" style="left:405px;top:536px;width:1px;height:20px;background:#d4e3f3"></div>
<div class="a" style="left:626px;top:536px;width:1px;height:20px;background:#d4e3f3"></div>
<div class="a" style="left:729px;top:536px;width:1px;height:20px;background:#d4e3f3"></div>
<div class="a" style="left:837px;top:536px;width:1px;height:20px;background:#d4e3f3"></div>
<div class="a" style="left:995px;top:536px;width:1px;height:20px;background:#d4e3f3"></div>
<div class="a" style="left:1122px;top:536px;width:1px;height:20px;background:#d4e3f3"></div>
<div class="a" style="left:1200px;top:536px;width:1px;height:20px;background:#d4e3f3"></div>
<div class="a" style="left:29px;top:536px;width:1286px;height:20px;overflow:hidden">
<div class="t" style="left:3px;top:2px;color:#000">359</div>
<div class="t" style="left:64px;top:2px;transform:scaleX(0.9);transform-origin:0 0;color:#000">STEFANY VIEIRA</div>
<div class="t" style="left:381px;top:2px;transform:scaleX(0.9);transform-origin:0 0;color:#000">STEFANY VIEIRA</div>
<div class="t" style="left:602px;top:2px;transform:scaleX(0.9);transform-origin:0 0;color:#000">FÍSICA</div>
<div class="t" style="left:705px;top:2px;transform:scaleX(0.9);transform-origin:0 0;color:#000">RESIDÊNCIA</div>
<div class="t" style="left:813px;top:2px;color:#000">052.866.307-07</div>
<div class="t" style="left:1097px;top:2px;color:#000">Ativo</div>
<div class="t" style="left:1176px;top:2px;color:#000">Não</div>
</div>
<div class="a" style="left:29px;top:556px;width:1286px;height:20px;background:#ffffff"></div>
<div class="a" style="left:29px;top:575px;width:1286px;height:1px;background:#d7e5f3"></div>
<div class="a" style="left:12px;top:556px;width:17px;height:20px;background:linear-gradient(90deg,#a3c4ec,#b7d2f2);border-bottom:1px solid #dce8f7;border-right:1px solid #8aaedd"></div>
<div class="a" style="left:88px;top:556px;width:1px;height:20px;background:#d4e3f3"></div>
<div class="a" style="left:405px;top:556px;width:1px;height:20px;background:#d4e3f3"></div>
<div class="a" style="left:626px;top:556px;width:1px;height:20px;background:#d4e3f3"></div>
<div class="a" style="left:729px;top:556px;width:1px;height:20px;background:#d4e3f3"></div>
<div class="a" style="left:837px;top:556px;width:1px;height:20px;background:#d4e3f3"></div>
<div class="a" style="left:995px;top:556px;width:1px;height:20px;background:#d4e3f3"></div>
<div class="a" style="left:1122px;top:556px;width:1px;height:20px;background:#d4e3f3"></div>
<div class="a" style="left:1200px;top:556px;width:1px;height:20px;background:#d4e3f3"></div>
<div class="a" style="left:29px;top:556px;width:1286px;height:20px;overflow:hidden">
<div class="t" style="left:3px;top:2px;color:#000">360</div>
<div class="t" style="left:64px;top:2px;transform:scaleX(0.9);transform-origin:0 0;color:#000">WALKIRIA SANTOS</div>
<div class="t" style="left:381px;top:2px;transform:scaleX(0.9);transform-origin:0 0;color:#000">WALKIRIA SANTOS</div>
<div class="t" style="left:602px;top:2px;transform:scaleX(0.9);transform-origin:0 0;color:#000">FÍSICA</div>
<div class="t" style="left:705px;top:2px;transform:scaleX(0.9);transform-origin:0 0;color:#000">RESIDÊNCIA</div>
<div class="t" style="left:813px;top:2px;color:#000">052.866.307-07</div>
<div class="t" style="left:1097px;top:2px;color:#000">Ativo</div>
<div class="t" style="left:1176px;top:2px;color:#000">Não</div>
</div>
<div class="a" style="left:29px;top:576px;width:1286px;height:20px;background:#e9f4f4"></div>
<div class="a" style="left:29px;top:595px;width:1286px;height:1px;background:#d7e5f3"></div>
<div class="a" style="left:12px;top:576px;width:17px;height:20px;background:linear-gradient(90deg,#a3c4ec,#b7d2f2);border-bottom:1px solid #dce8f7;border-right:1px solid #8aaedd"></div>
<div class="a" style="left:88px;top:576px;width:1px;height:20px;background:#d4e3f3"></div>
<div class="a" style="left:405px;top:576px;width:1px;height:20px;background:#d4e3f3"></div>
<div class="a" style="left:626px;top:576px;width:1px;height:20px;background:#d4e3f3"></div>
<div class="a" style="left:729px;top:576px;width:1px;height:20px;background:#d4e3f3"></div>
<div class="a" style="left:837px;top:576px;width:1px;height:20px;background:#d4e3f3"></div>
<div class="a" style="left:995px;top:576px;width:1px;height:20px;background:#d4e3f3"></div>
<div class="a" style="left:1122px;top:576px;width:1px;height:20px;background:#d4e3f3"></div>
<div class="a" style="left:1200px;top:576px;width:1px;height:20px;background:#d4e3f3"></div>
<div class="a" style="left:29px;top:576px;width:1286px;height:20px;overflow:hidden">
<div class="t" style="left:3px;top:2px;color:#000">361</div>
<div class="t" style="left:64px;top:2px;transform:scaleX(0.9);transform-origin:0 0;color:#000">MARUCIA COSTA</div>
<div class="t" style="left:381px;top:2px;transform:scaleX(0.9);transform-origin:0 0;color:#000">MARUCIA COSTA</div>
<div class="t" style="left:602px;top:2px;transform:scaleX(0.9);transform-origin:0 0;color:#000">FÍSICA</div>
<div class="t" style="left:705px;top:2px;transform:scaleX(0.9);transform-origin:0 0;color:#000">RESIDÊNCIA</div>
<div class="t" style="left:813px;top:2px;color:#000">052.866.307-07</div>
<div class="t" style="left:1097px;top:2px;color:#000">Ativo</div>
<div class="t" style="left:1176px;top:2px;color:#000">Não</div>
</div>
<div class="a" style="left:29px;top:596px;width:1286px;height:20px;background:#ffffff"></div>
<div class="a" style="left:29px;top:615px;width:1286px;height:1px;background:#d7e5f3"></div>
<div class="a" style="left:12px;top:596px;width:17px;height:20px;background:linear-gradient(90deg,#a3c4ec,#b7d2f2);border-bottom:1px solid #dce8f7;border-right:1px solid #8aaedd"></div>
<div class="a" style="left:88px;top:596px;width:1px;height:20px;background:#d4e3f3"></div>
<div class="a" style="left:405px;top:596px;width:1px;height:20px;background:#d4e3f3"></div>
<div class="a" style="left:626px;top:596px;width:1px;height:20px;background:#d4e3f3"></div>
<div class="a" style="left:729px;top:596px;width:1px;height:20px;background:#d4e3f3"></div>
<div class="a" style="left:837px;top:596px;width:1px;height:20px;background:#d4e3f3"></div>
<div class="a" style="left:995px;top:596px;width:1px;height:20px;background:#d4e3f3"></div>
<div class="a" style="left:1122px;top:596px;width:1px;height:20px;background:#d4e3f3"></div>
<div class="a" style="left:1200px;top:596px;width:1px;height:20px;background:#d4e3f3"></div>
<div class="a" style="left:29px;top:596px;width:1286px;height:20px;overflow:hidden">
<div class="t" style="left:3px;top:2px;color:#000">362</div>
<div class="t" style="left:64px;top:2px;transform:scaleX(0.9);transform-origin:0 0;color:#000">SIMONE MOURA</div>
<div class="t" style="left:381px;top:2px;transform:scaleX(0.9);transform-origin:0 0;color:#000">SIMONE MOURA</div>
<div class="t" style="left:602px;top:2px;transform:scaleX(0.9);transform-origin:0 0;color:#000">FÍSICA</div>
<div class="t" style="left:705px;top:2px;transform:scaleX(0.9);transform-origin:0 0;color:#000">RESIDÊNCIA</div>
<div class="t" style="left:813px;top:2px;color:#000">052.866.307-07</div>
<div class="t" style="left:1097px;top:2px;color:#000">Ativo</div>
<div class="t" style="left:1176px;top:2px;color:#000"></div>
</div>
<div class="a" style="left:29px;top:616px;width:1286px;height:20px;background:#e9f4f4"></div>
<div class="a" style="left:29px;top:635px;width:1286px;height:1px;background:#d7e5f3"></div>
<div class="a" style="left:12px;top:616px;width:17px;height:20px;background:linear-gradient(90deg,#a3c4ec,#b7d2f2);border-bottom:1px solid #dce8f7;border-right:1px solid #8aaedd"></div>
<div class="a" style="left:88px;top:616px;width:1px;height:20px;background:#d4e3f3"></div>
<div class="a" style="left:405px;top:616px;width:1px;height:20px;background:#d4e3f3"></div>
<div class="a" style="left:626px;top:616px;width:1px;height:20px;background:#d4e3f3"></div>
<div class="a" style="left:729px;top:616px;width:1px;height:20px;background:#d4e3f3"></div>
<div class="a" style="left:837px;top:616px;width:1px;height:20px;background:#d4e3f3"></div>
<div class="a" style="left:995px;top:616px;width:1px;height:20px;background:#d4e3f3"></div>
<div class="a" style="left:1122px;top:616px;width:1px;height:20px;background:#d4e3f3"></div>
<div class="a" style="left:1200px;top:616px;width:1px;height:20px;background:#d4e3f3"></div>
<div class="a" style="left:29px;top:616px;width:1286px;height:20px;overflow:hidden">
<div class="t" style="left:3px;top:2px;color:#000">363</div>
<div class="t" style="left:64px;top:2px;transform:scaleX(0.9);transform-origin:0 0;color:#000">ODETE LINS</div>
<div class="t" style="left:381px;top:2px;transform:scaleX(0.9);transform-origin:0 0;color:#000">ODETE LINS</div>
<div class="t" style="left:602px;top:2px;transform:scaleX(0.9);transform-origin:0 0;color:#000">FÍSICA</div>
<div class="t" style="left:705px;top:2px;transform:scaleX(0.9);transform-origin:0 0;color:#000">RESIDÊNCIA</div>
<div class="t" style="left:813px;top:2px;color:#000">052.866.307-07</div>
<div class="t" style="left:1097px;top:2px;color:#000">Ativo</div>
<div class="t" style="left:1176px;top:2px;color:#000"></div>
</div>
<div class="a" style="left:29px;top:636px;width:1286px;height:20px;background:#ffffff"></div>
<div class="a" style="left:29px;top:655px;width:1286px;height:1px;background:#d7e5f3"></div>
<div class="a" style="left:12px;top:636px;width:17px;height:20px;background:linear-gradient(90deg,#a3c4ec,#b7d2f2);border-bottom:1px solid #dce8f7;border-right:1px solid #8aaedd"></div>
<div class="a" style="left:88px;top:636px;width:1px;height:20px;background:#d4e3f3"></div>
<div class="a" style="left:405px;top:636px;width:1px;height:20px;background:#d4e3f3"></div>
<div class="a" style="left:626px;top:636px;width:1px;height:20px;background:#d4e3f3"></div>
<div class="a" style="left:729px;top:636px;width:1px;height:20px;background:#d4e3f3"></div>
<div class="a" style="left:837px;top:636px;width:1px;height:20px;background:#d4e3f3"></div>
<div class="a" style="left:995px;top:636px;width:1px;height:20px;background:#d4e3f3"></div>
<div class="a" style="left:1122px;top:636px;width:1px;height:20px;background:#d4e3f3"></div>
<div class="a" style="left:1200px;top:636px;width:1px;height:20px;background:#d4e3f3"></div>
<div class="a" style="left:29px;top:636px;width:1286px;height:20px;overflow:hidden">
<div class="t" style="left:3px;top:2px;color:#000">364</div>
<div class="t" style="left:64px;top:2px;transform:scaleX(0.9);transform-origin:0 0;color:#000">BEATRIZ GOMES</div>
<div class="t" style="left:381px;top:2px;transform:scaleX(0.9);transform-origin:0 0;color:#000">BEATRIZ GOMES</div>
<div class="t" style="left:602px;top:2px;transform:scaleX(0.9);transform-origin:0 0;color:#000">FÍSICA</div>
<div class="t" style="left:705px;top:2px;transform:scaleX(0.9);transform-origin:0 0;color:#000">RESIDÊNCIA</div>
<div class="t" style="left:813px;top:2px;color:#000">052.866.307-07</div>
<div class="t" style="left:1097px;top:2px;color:#000">Ativo</div>
<div class="t" style="left:1176px;top:2px;color:#000">Não</div>
</div>
<div class="a" style="left:29px;top:656px;width:1286px;height:20px;background:#e9f4f4"></div>
<div class="a" style="left:29px;top:675px;width:1286px;height:1px;background:#d7e5f3"></div>
<div class="a" style="left:12px;top:656px;width:17px;height:20px;background:linear-gradient(90deg,#a3c4ec,#b7d2f2);border-bottom:1px solid #dce8f7;border-right:1px solid #8aaedd"></div>
<div class="a" style="left:88px;top:656px;width:1px;height:20px;background:#d4e3f3"></div>
<div class="a" style="left:405px;top:656px;width:1px;height:20px;background:#d4e3f3"></div>
<div class="a" style="left:626px;top:656px;width:1px;height:20px;background:#d4e3f3"></div>
<div class="a" style="left:729px;top:656px;width:1px;height:20px;background:#d4e3f3"></div>
<div class="a" style="left:837px;top:656px;width:1px;height:20px;background:#d4e3f3"></div>
<div class="a" style="left:995px;top:656px;width:1px;height:20px;background:#d4e3f3"></div>
<div class="a" style="left:1122px;top:656px;width:1px;height:20px;background:#d4e3f3"></div>
<div class="a" style="left:1200px;top:656px;width:1px;height:20px;background:#d4e3f3"></div>
<div class="a" style="left:29px;top:656px;width:1286px;height:20px;overflow:hidden">
<div class="t" style="left:3px;top:2px;color:#000">365</div>
<div class="t" style="left:64px;top:2px;transform:scaleX(0.9);transform-origin:0 0;color:#000">VITOR FERREIRA</div>
<div class="t" style="left:381px;top:2px;transform:scaleX(0.9);transform-origin:0 0;color:#000">VITOR FERREIRA</div>
<div class="t" style="left:602px;top:2px;transform:scaleX(0.9);transform-origin:0 0;color:#000">FÍSICA</div>
<div class="t" style="left:705px;top:2px;transform:scaleX(0.9);transform-origin:0 0;color:#000">RESIDÊNCIA</div>
<div class="t" style="left:1097px;top:2px;color:#000">Ativo</div>
<div class="t" style="left:1176px;top:2px;color:#000">Sim</div>
</div>
<div class="a" style="left:29px;top:676px;width:1286px;height:12px;background:#ffffff"></div>
<div class="a" style="left:12px;top:676px;width:17px;height:12px;background:linear-gradient(90deg,#a3c4ec,#b7d2f2);border-bottom:1px solid #dce8f7;border-right:1px solid #8aaedd"></div>
<div class="a" style="left:88px;top:676px;width:1px;height:12px;background:#d4e3f3"></div>
<div class="a" style="left:405px;top:676px;width:1px;height:12px;background:#d4e3f3"></div>
<div class="a" style="left:626px;top:676px;width:1px;height:12px;background:#d4e3f3"></div>
<div class="a" style="left:729px;top:676px;width:1px;height:12px;background:#d4e3f3"></div>
<div class="a" style="left:837px;top:676px;width:1px;height:12px;background:#d4e3f3"></div>
<div class="a" style="left:995px;top:676px;width:1px;height:12px;background:#d4e3f3"></div>
<div class="a" style="left:1122px;top:676px;width:1px;height:12px;background:#d4e3f3"></div>
<div class="a" style="left:1200px;top:676px;width:1px;height:12px;background:#d4e3f3"></div>
<div class="a" style="left:29px;top:676px;width:1286px;height:12px;overflow:hidden">
<div class="t" style="left:3px;top:2px;color:#000">366</div>
<div class="t" style="left:64px;top:2px;transform:scaleX(0.9);transform-origin:0 0;color:#000">FERNANDA PIRES WANICK</div>
<div class="t" style="left:381px;top:2px;transform:scaleX(0.9);transform-origin:0 0;color:#000">FERNANDA PIRES WANICK</div>
<div class="t" style="left:602px;top:2px;transform:scaleX(0.9);transform-origin:0 0;color:#000">FÍSICA</div>
<div class="t" style="left:705px;top:2px;transform:scaleX(0.9);transform-origin:0 0;color:#000">RESIDÊNCIA</div>
<div class="t" style="left:813px;top:2px;color:#000">052.866.307-07</div>
<div class="t" style="left:1097px;top:2px;color:#000">Ativo</div>
<div class="t" style="left:1176px;top:2px;color:#000">Sim</div>
</div>
<div class="a" style="left:1316px;top:339px;width:18px;height:349px;background:linear-gradient(90deg,#e8f1fb,#f6fafe 50%,#dfeaf7)"></div>
<div class="a" style="left:1316px;top:340px;width:17px;height:17px;border-radius:3px;background:linear-gradient(#8ab5ee,#4f84d2 55%,#3d6fc2);border:1px solid #3b66b0"></div>
<svg class="a" style="left:1319px;top:344px" width="11" height="9" viewBox="0 0 11 9"><path d="M1.5 7l4.5-4.5 4.5 4.5" stroke="#fff" stroke-width="2" fill="none"/></svg>
<div class="a" style="left:1316px;top:359px;width:17px;height:13px;border-radius:3px;background:linear-gradient(#8ab5ee,#4f84d2 55%,#3d6fc2);border:1px solid #3b66b0"></div>
<svg class="a" style="left:1320px;top:361px" width="9" height="9" viewBox="0 0 9 9"><path d="M1 2.5h8M1 5h8M1 7.5h8" stroke="#dde9f8" stroke-width="1"/></svg>
<div class="a" style="left:1316px;top:670px;width:17px;height:17px;border-radius:3px;background:linear-gradient(#8ab5ee,#4f84d2 55%,#3d6fc2);border:1px solid #3b66b0"></div>
<svg class="a" style="left:1319px;top:674px" width="11" height="9" viewBox="0 0 11 9"><path d="M1.5 2.5l4.5 4.5 4.5-4.5" stroke="#fff" stroke-width="2" fill="none"/></svg>
<div class="a" style="left:1343px;top:146px;width:23px;height:551px;background:#dfedfb"></div>
<div class="a" style="left:1346px;top:150px;width:20px;height:155px;background:linear-gradient(90deg,#bcd6f3,#a6c7ee);border:1px solid #87acdc;border-right:none"></div>
<svg class="a" style="left:1349px;top:157px" width="16" height="16" viewBox="0 0 16 16"><rect x="0.5" y="0.5" width="14" height="15" fill="#f2f2f2" stroke="#c8ccd0"/><path d="M2 3h11M2 5h11" stroke="#dcdcdc"/></svg>
<div class="t" style="left:1350px;top:176px;transform-origin:0 0;transform:translate(15px,0) rotate(90deg);color:#19227e;font-size:11px;letter-spacing:0px">Configurações do Sistema</div>
<div class="a" style="left:1346px;top:311px;width:20px;height:139px;background:linear-gradient(90deg,#bcd6f3,#a6c7ee);border:1px solid #87acdc;border-right:none"></div>
<svg class="a" style="left:1349px;top:314px" width="16" height="17" viewBox="0 0 16 17"><rect x="3.5" y="0.5" width="11" height="13" fill="#f4f4f4" stroke="#6a7a8a"/><circle cx="9" cy="7" r="3.5" fill="#cfe4f8" stroke="#3a6a9a"/><path d="M6.5 9.5L2 14" stroke="#e8a020" stroke-width="2"/></svg>
<div class="t" style="left:1350px;top:334px;transform-origin:0 0;transform:translate(15px,0) rotate(90deg);color:#19227e;font-size:11px;letter-spacing:0px">Assistente de Pesquisa</div>
<div class="a" style="left:0px;top:697px;width:1366px;height:23px;background:#dfebf9"></div>
<div class="a" style="left:4px;top:700px;width:71px;height:20px;background:linear-gradient(#cfe1f6,#b5d1f1);border:1px solid #9cbde8;border-bottom:none"></div>
<svg class="a" style="left:10px;top:702px" width="18" height="17" viewBox="0 0 18 17"><rect x="0.5" y="0.5" width="16" height="11" rx="1" fill="#3a9ae8" stroke="#1a1a2a"/><path d="M3 4h9M3 7h6" stroke="#a8d8f8"/><path d="M11 3l3 1.5-3 1.5" fill="#fff"/><rect x="6" y="12" width="5" height="2" fill="#777"/><rect x="2" y="14" width="13" height="2" fill="#ccc"/></svg>
<div class="t" style="left:28px;top:705px;color:#19227e;letter-spacing:-0.3px">Sistema</div>
<div class="a" style="left:76px;top:700px;width:103px;height:20px;background:linear-gradient(#cfe1f6,#b5d1f1);border:1px solid #9cbde8;border-bottom:none"></div>
<svg class="a" style="left:84px;top:703px" width="15" height="16" viewBox="0 0 15 16"><path d="M1.5 0.5h8l4 4v11h-12z" fill="#e8f2fb" stroke="#8a9ab0"/><path d="M9.5 0.5v4h4" fill="#fff" stroke="#8a9ab0"/><text x="3" y="13" font-size="7" fill="#30a0a0" font-weight="bold" font-family="Liberation Sans">M</text></svg>
<div class="t" style="left:100px;top:705px;color:#19227e;letter-spacing:-0.3px">Log do Sistema</div>
<div class="a" style="left:192px;top:53px;width:982px;height:4px;background:#74b0ec;border-top:1px solid #4a6fb8;border-left:1px solid #4a6fb8;border-right:1px solid #4a6fb8"></div>
<div class="a" style="left:193px;top:54px;width:980px;height:1px;background:#fff"></div>
<div class="a" style="left:192px;top:662px;width:982px;height:5px;background:#6a9edb;border:1px solid #4a6fb8;border-top:none"></div>
<div class="a" style="left:193px;top:665px;width:980px;height:1px;background:#fff"></div>
<div class="a" style="left:193px;top:662px;width:1px;height:4px;background:#fff"></div>
<div class="a" style="left:1172px;top:662px;width:1px;height:4px;background:#fff"></div>
<div class="a" style="left:144px;top:57px;width:1078px;height:606px;background:#e0eefc;border:1px solid #4062b0"></div>
<div class="a" style="left:145px;top:58px;width:1076px;height:604px;border:1px solid #fff"></div>
<div class="a" style="left:146px;top:59px;width:1074px;height:22px;background:linear-gradient(90deg,#6a9fd9 0%,#74aceb 35%,#7ab7f2 55%,#72ace8 80%,#6aa0dc 100%)"></div>
<div class="a" style="left:146px;top:81px;width:2px;height:579px;background:#6a9edb"></div>
<div class="a" style="left:1218px;top:81px;width:2px;height:579px;background:#6a9edb"></div>
<div class="a" style="left:146px;top:659px;width:1074px;height:2px;background:#6a9edb"></div>
<svg class="a" style="left:150px;top:63px" width="17" height="13" viewBox="0 0 17 13"><g fill="none" stroke="#eaf3fc" stroke-width="1.2"><ellipse cx="9" cy="6.5" rx="7" ry="4"/><path d="M1 3q4-3 10-1M3 11q6 2 13-2M5 6q3-2 7 0"/></g></svg>
<div class="t" style="left:170px;top:62px;color:#d3e5f9;font-weight:bold;font-size:13px;line-height:15px;letter-spacing:-0.25px">Orçamento - VITOR MENDES RIBEIRO</div>
<div class="a" style="left:1201px;top:62px;width:17px;height:16px;border-radius:3px;background:linear-gradient(135deg,#7aaee8,#4a7cc8 70%,#3f6cb8);border:1px solid #4a74b8"></div>
<svg class="a" style="left:1201px;top:62px" width="17" height="16" viewBox="0 0 17 16"><path d="M5 4.5l7 7M12 4.5l-7 7" stroke="#d8e6f8" stroke-width="2.2"/></svg>
<svg class="a" style="left:158px;top:87px" width="16" height="14" viewBox="0 0 16 14"><path d="M2 7.5l4.5 4.5L14.5 2" stroke="#22a022" stroke-width="3.8" fill="none"/><path d="M2.5 7.5l4 4L14 2.5" stroke="#5ad04a" stroke-width="1.3" fill="none"/></svg>
<div class="t" style="left:178px;top:87px;color:#19227e;font-size:12px;line-height:14px">Confirmar</div>
<div class="a" style="left:243px;top:85px;width:1px;height:18px;background:#a4bfdf"></div>
<svg class="a" style="left:256px;top:86px" width="15" height="15" viewBox="0 0 15 15"><path d="M1 7h3v7H1zM5 7l3-6q2 0 2 2l-1 3h4q1.5 0 1.5 1.5l-1.5 6H5z" fill="#c8d0d8" stroke="#b0b8c0"/></svg>
<div class="t" style="left:276px;top:87px;color:#a9bed9;font-size:12px;line-height:14px">Aprovar</div>
<svg class="a" style="left:334px;top:86px" width="15" height="15" viewBox="0 0 15 15"><path d="M1 1h3v7H1zM5 8l3 6q2 0 2-2l-1-3h4q1.5 0 1.5-1.5L13 1H5z" fill="#c8d0d8" stroke="#b0b8c0"/></svg>
<div class="t" style="left:354px;top:87px;color:#a9bed9;font-size:12px;line-height:14px">Recusar</div>
<div class="a" style="left:406px;top:85px;width:1px;height:18px;background:#a4bfdf"></div>
<svg class="a" style="left:420px;top:86px" width="14" height="16" viewBox="0 0 14 16"><path d="M0.5 2.5h4v-2h5v2h4v13h-13z" fill="#fff" stroke="#3a5070"/><path d="M7 3v4" stroke="#3a5070"/></svg>
<div class="t" style="left:439px;top:87px;color:#19227e;font-size:12px;line-height:14px">Enviar Proposta</div>
<svg class="a" style="left:537px;top:86px" width="16" height="16" viewBox="0 0 16 16"><circle cx="8" cy="9" r="6.5" fill="#dde3ea" stroke="#b8c2cc"/><path d="M8 5v4h3" stroke="#b0b8c0" fill="none"/><circle cx="3" cy="2.5" r="2" fill="#c8d0d8"/><circle cx="13" cy="2.5" r="2" fill="#c8d0d8"/></svg>
<div class="t" style="left:557px;top:87px;color:#a9bed9;font-size:12px;line-height:14px">Pré-Agenda</div>
<svg class="a" style="left:637px;top:86px" width="15" height="16" viewBox="0 0 15 16"><rect x="0.5" y="0.5" width="13" height="15" fill="#a86030" stroke="#704020"/><rect x="2" y="2" width="6" height="12" fill="#f0f0f0"/><path d="M3 8h5M6 6l2 2-2 2" stroke="#3050a0" fill="none"/></svg>
<div class="t" style="left:656px;top:87px;color:#19227e;font-size:12px;line-height:14px">Sair</div>
<div class="a" style="left:152px;top:118px;width:1062px;height:305px;border:1px solid #d7dde3;border-bottom:none"></div>
<div class="t" style="left:158px;top:126px;letter-spacing:-0.3px">Empresa</div>
<div class="t" style="left:407px;top:126px;letter-spacing:-0.3px">Vendedor</div>
<div class="t" style="left:646px;top:126px;letter-spacing:-0.3px">Data Validade</div>
<div class="t" style="left:745px;top:126px;letter-spacing:-0.3px">Nº Identificador</div>
<div class="t" style="left:833px;top:126px;letter-spacing:-0.3px">Hora Desejada</div>
<div class="t" style="left:915px;top:126px;letter-spacing:-0.3px">Pedido</div>
<div class="a" style="left:158px;top:141px;width:68px;height:20px;background:#fff;border:1px solid #8fb3e1;"></div>
<div class="t" style="left:161px;top:145px;transform:scaleX(1.0);transform-origin:0 0;">1</div>
<div class="a" style="left:231px;top:141px;width:171px;height:20px;background:#fff;border:1px solid #8fb3e1;"></div>
<div class="t" style="left:234px;top:145px;transform:scaleX(0.89);transform-origin:0 0;">BIOVET SERVIÇOS LTDA EPP</div>
<div class="a" style="left:384px;top:143px;width:16px;height:16px;border-radius:3px;background:linear-gradient(#9cc0f0,#5b8ad6 50%,#3f6fc4);border:1px solid #3e67b0"></div>
<svg class="a" style="left:384px;top:143px" width="16" height="16" viewBox="0 0 16 16"><path d="M3.5 8.5h2M7 8.5h2M10.5 8.5h2" stroke="#fff" stroke-width="2"/></svg>
<div class="a" style="left:407px;top:141px;width:67px;height:20px;background:#fff;border:1px solid #8fb3e1;"></div>
<div class="t" style="left:410px;top:145px;transform:scaleX(1.0);transform-origin:0 0;">92</div>
<div class="a" style="left:480px;top:141px;width:161px;height:20px;background:#fff;border:1px solid #8fb3e1;"></div>
<div class="t" style="left:483px;top:145px;transform:scaleX(0.89);transform-origin:0 0;">BEATRIZ BARAT</div>
<div class="a" style="left:623px;top:143px;width:16px;height:16px;border-radius:3px;background:linear-gradient(#9cc0f0,#5b8ad6 50%,#3f6fc4);border:1px solid #3e67b0"></div>
<svg class="a" style="left:623px;top:143px" width="16" height="16" viewBox="0 0 16 16"><path d="M3.5 8.5h2M7 8.5h2M10.5 8.5h2" stroke="#fff" stroke-width="2"/></svg>
<div class="a" style="left:647px;top:141px;width:93px;height:20px;background:#fff;border:1px solid #8fb3e1;"></div>
<div class="t" style="left:650px;top:145px;transform:scaleX(1.0);transform-origin:0 0;letter-spacing:-0.3px">30/12/2024</div>
<div class="a" style="left:725px;top:143px;width:14px;height:17px;border-radius:3px;background:linear-gradient(#9cc0f0,#5b8ad6 50%,#3f6fc4);border:1px solid #3e67b0"></div>
<svg class="a" style="left:725px;top:143px" width="14" height="17" viewBox="0 0 14 17"><path d="M3 7l4 4 4-4" stroke="#fff" stroke-width="2" fill="none"/></svg>
<div class="a" style="left:746px;top:141px;width:84px;height:20px;background:#fff;border:1px solid #8fb3e1;background:#d8e6f6"></div>
<div class="t" style="left:749px;top:145px;transform:scaleX(1.0);transform-origin:0 0;color:#c8102e;font-weight:bold;font-size:12px;letter-spacing:-0.2px">000101</div>
<div class="a" style="left:835px;top:141px;width:74px;height:20px;background:#fff;border:1px solid #8fb3e1;background:#d4e2f3;border-color:#a6c2e6"></div>
<div class="t" style="left:838px;top:145px;transform:scaleX(1.0);transform-origin:0 0;color:#a9bfd9;letter-spacing:-0.3px">00:00</div>
<div class="a" style="left:894px;top:143px;width:14px;height:16px;border-radius:3px;background:linear-gradient(#c8dcf4,#a0c0e8);border:1px solid #8aaedc"></div>
<svg class="a" style="left:894px;top:143px" width="14" height="16" viewBox="0 0 14 16"><path d="M3 6l4-3 4 3M3 10l4 3 4-3" stroke="#e8f0fa" stroke-width="1.3" fill="none"/></svg>
<div class="a" style="left:915px;top:141px;width:67px;height:20px;background:#fff;border:1px solid #8fb3e1;background:transparent"></div>
<div class="a" style="left:1000px;top:144px;width:14px;height:14px;background:linear-gradient(135deg,#d0e0f4,#eef5fd);border:1px solid #a8c2e2"></div>
<div class="t" style="left:1017px;top:145px;color:#a9bed9;letter-spacing:-0.3px">Orçamento Contrato</div>
<div class="a" style="left:158px;top:168px;width:244px;height:43px;border:1px solid #d3dae2"></div>
<svg class="a" style="left:167px;top:184px" width="14" height="14" viewBox="0 0 14 14"><defs><radialGradient id="rg167184" cx="0.45" cy="0.35" r="0.7"><stop offset="0" stop-color="#ffffff"/><stop offset="0.55" stop-color="#c4d8f2"/><stop offset="1" stop-color="#90b0e0"/></radialGradient><linearGradient id="rs167184" x1="0" y1="0" x2="0" y2="1"><stop offset="0" stop-color="#9ab6dc"/><stop offset="1" stop-color="#34508c"/></linearGradient></defs><circle cx="6.5" cy="6.5" r="6" fill="url(#rg167184)" stroke="url(#rs167184)"/><circle cx="6.5" cy="6.5" r="2.5" fill="#1a2a7a"/></svg>
<div class="t" style="left:184px;top:185px;letter-spacing:-0.3px">Químico</div>
<svg class="a" style="left:280px;top:184px" width="14" height="14" viewBox="0 0 14 14"><defs><radialGradient id="rg280184" cx="0.45" cy="0.35" r="0.7"><stop offset="0" stop-color="#ffffff"/><stop offset="0.55" stop-color="#c4d8f2"/><stop offset="1" stop-color="#90b0e0"/></radialGradient><linearGradient id="rs280184" x1="0" y1="0" x2="0" y2="1"><stop offset="0" stop-color="#9ab6dc"/><stop offset="1" stop-color="#34508c"/></linearGradient></defs><circle cx="6.5" cy="6.5" r="6" fill="url(#rg280184)" stroke="url(#rs280184)"/></svg>
<div class="t" style="left:296px;top:185px;letter-spacing:-0.3px">Não Químico</div>
<div class="a" style="left:407px;top:168px;width:261px;height:43px;border:1px solid #d3dae2"></div>
<div class="a" style="left:413px;top:183px;width:14px;height:14px;background:linear-gradient(135deg,#b8d0ee,#e8f1fc);border:1px solid #6f94c6"></div>
<div class="t" style="left:429px;top:185px;letter-spacing:-0.3px">NFS-e Posterior</div>
<div class="a" style="left:514px;top:183px;width:14px;height:14px;background:linear-gradient(135deg,#b8d0ee,#e8f1fc);border:1px solid #6f94c6"></div>
<svg class="a" style="left:514px;top:183px" width="14" height="14" viewBox="0 0 14 14"><path d="M3 7l3 3 5-6" stroke="#19227e" stroke-width="1.6" fill="none"/></svg>
<div class="t" style="left:530px;top:185px;letter-spacing:-0.3px">Gerar NFS-e Baixa Serviço</div>
<div class="a" style="left:673px;top:168px;width:372px;height:43px;border:1px solid #d3dae2"></div>
<div class="t" style="left:679px;top:171px;letter-spacing:-0.3px">Forma de Pagamento</div>
<div class="a" style="left:680px;top:185px;width:68px;height:20px;background:#fff;border:1px solid #8fb3e1;"></div>
<div class="t" style="left:683px;top:189px;transform:scaleX(1.0);transform-origin:0 0;">1</div>
<div class="a" style="left:754px;top:185px;width:282px;height:20px;background:#fff;border:1px solid #8fb3e1;"></div>
<div class="t" style="left:757px;top:189px;transform:scaleX(0.89);transform-origin:0 0;">BOLETO</div>
<div class="a" style="left:1018px;top:187px;width:16px;height:16px;border-radius:3px;background:linear-gradient(#9cc0f0,#5b8ad6 50%,#3f6fc4);border:1px solid #3e67b0"></div>
<svg class="a" style="left:1018px;top:187px" width="16" height="16" viewBox="0 0 16 16"><path d="M3.5 8.5h2M7 8.5h2M10.5 8.5h2" stroke="#fff" stroke-width="2"/></svg>
<div class="a" style="left:1051px;top:168px;width:155px;height:43px;border:1px solid #d3dae2"></div>
<div class="t" style="left:1065px;top:183px;letter-spacing:-0.1px">Status:</div>
<div class="t" style="left:1105px;top:181px;color:#1a1ac0;font-weight:bold;font-size:14px;line-height:16px;letter-spacing:-0.2px">Aprovado</div>
<div class="a" style="left:594px;top:214px;width:73px;height:22px;border-radius:3px;background:linear-gradient(#edf4fd,#cfe1f7 50%,#b4d0f1);border:1px solid #6f94d0;border-bottom-color:#3f5eaa"></div>
<svg class="a" style="left:598px;top:217px" width="16" height="16" viewBox="0 0 16 16"><path d="M6.5 1.5h3v5h5v3h-5v5h-3v-5h-5v-3h5z" fill="#3cc03c" stroke="#1f8a1f" stroke-width="0.8"/></svg>
<div class="t" style="left:617px;top:219px;color:#19227e;letter-spacing:-0.3px">Adicionar</div>
<div class="t" style="left:713px;top:219px;letter-spacing:-0.1px">A forma de pagamento selecionada será compartilhada por todas as parcelas!</div>
<div class="a" style="left:1133px;top:214px;width:73px;height:22px;border-radius:3px;background:linear-gradient(#edf4fd,#cfe1f7 50%,#b4d0f1);border:1px solid #6f94d0;border-bottom-color:#3f5eaa"></div>
<svg class="a" style="left:1137px;top:217px" width="16" height="16" viewBox="0 0 16 16"><path d="M6.5 1.5h3v5h5v3h-5v5h-3v-5h-5v-3h5z" fill="#3cc03c" stroke="#1f8a1f" stroke-width="0.8"/></svg>
<div class="t" style="left:1156px;top:219px;color:#19227e;letter-spacing:-0.3px">Adicionar</div>
<div class="a" style="left:152px;top:118px;width:1062px;height:536px;border:1px solid #d7dde3"></div>
<div class="a" style="left:158px;top:239px;width:509px;height:182px;background:#fff;border:1px solid #8ab2e2"></div>
<div class="a" style="left:159px;top:240px;width:507px;height:180px;border:1px solid #fff"></div>
<div class="a" style="left:160px;top:241px;width:505px;height:24px;background:linear-gradient(90deg,#6a9ed8 0%,#72abe8 30%,#78b4f0 50%,#74afec 70%,#6a9ed8 100%)"></div>
<div class="t" style="left:314px;top:246px;color:#f4f8fd;font-weight:bold;font-size:11px;line-height:14px;letter-spacing:0.35px">Relação de Serviços do Orçamento</div>
<div class="a" style="left:160px;top:265px;width:505px;height:22px;background:linear-gradient(#9fc1ea,#bad5f3);border-top:1px solid #fff;border-bottom:1px solid #8cb0de"></div>
<div class="a" style="left:160px;top:395px;width:505px;height:24px;background:linear-gradient(#a2c3eb,#bcd6f3);border:1px solid #8ab2e2;border-bottom-color:#8ab2e2"></div>
<div class="a" style="left:161px;top:396px;width:503px;height:1px;background:#f0f6fd"></div>
<div class="a" style="left:176px;top:265px;width:1px;height:22px;background:#88acdc"></div>
<div class="a" style="left:301px;top:265px;width:1px;height:22px;background:#88acdc"></div>
<div class="a" style="left:388px;top:265px;width:1px;height:22px;background:#88acdc"></div>
<div class="a" style="left:464px;top:265px;width:1px;height:22px;background:#88acdc"></div>
<div class="a" style="left:494px;top:265px;width:1px;height:22px;background:#88acdc"></div>
<div class="a" style="left:594px;top:265px;width:1px;height:22px;background:#88acdc"></div>
<div class="a" style="left:622px;top:265px;width:1px;height:22px;background:#88acdc"></div>
<div class="a" style="left:160px;top:265px;width:16px;height:22px;background:linear-gradient(#9fc1ea,#bad5f3);border-right:1px solid #88acdc;border-top:1px solid #e8f0fa"></div>
<div class="t" style="left:182px;top:270px;color:#19227e;letter-spacing:-0.3px">Tipo de Serviço</div>
<div class="t" style="left:306px;top:270px;color:#19227e;letter-spacing:-0.3px">Tem. Estimado</div>
<div class="t" style="left:393px;top:270px;color:#19227e;letter-spacing:-0.3px">Valor R$</div>
<div class="t" style="left:469px;top:270px;color:#19227e;letter-spacing:-0.3px">Nº</div>
<div class="t" style="left:499px;top:270px;color:#19227e;letter-spacing:-0.3px">Garantia</div>
<div class="a" style="left:176px;top:287px;width:446px;height:23px;background:#fff"></div>
<div class="a" style="left:176px;top:309px;width:446px;height:1px;background:#d2e2f3"></div>
<div class="a" style="left:160px;top:287px;width:16px;height:23px;background:linear-gradient(90deg,#a3c4ec,#b7d2f2);border-bottom:1px solid #dce8f7;border-right:1px solid #88acdc"></div>
<div class="a" style="left:301px;top:287px;width:1px;height:23px;background:#d0e1f3"></div>
<div class="a" style="left:388px;top:287px;width:1px;height:23px;background:#d0e1f3"></div>
<div class="a" style="left:464px;top:287px;width:1px;height:23px;background:#d0e1f3"></div>
<div class="a" style="left:494px;top:287px;width:1px;height:23px;background:#d0e1f3"></div>
<div class="a" style="left:594px;top:287px;width:1px;height:23px;background:#d0e1f3"></div>
<div class="a" style="left:622px;top:287px;width:1px;height:23px;background:#d0e1f3"></div>
<div class="t" style="left:179px;top:292px;transform:scaleX(0.897);transform-origin:0 0;color:#000">BARATA</div>
<div class="t" style="left:305px;top:292px;color:#000;letter-spacing:-0.2px">03:00</div>
<div class="t" style="left:388px;top:292px;width:73px;text-align:right;color:#000;letter-spacing:-0.2px">140,00</div>
<div class="t" style="left:464px;top:292px;width:27px;text-align:right;color:#000">0</div>
<div class="t" style="left:497px;top:292px;color:#000;letter-spacing:-0.1px">Não Informado</div>
<div class="a" style="left:598px;top:289px;width:22px;height:19px;border-radius:3px;background:linear-gradient(#90b8f0,#5a8ad6 50%,#3e6cc0);border:1px solid #3050a0"></div>
<svg class="a" style="left:598px;top:289px" width="22" height="19" viewBox="0 0 22 19"><path d="M5 4Q11 6.5 16.5 14" stroke="#c41414" stroke-width="2.3" fill="none" stroke-linecap="round"/><path d="M17.5 4Q9.5 6 5.5 14.5" stroke="#d21c1c" stroke-width="2.6" fill="none" stroke-linecap="round"/></svg>
<div class="a" style="left:176px;top:310px;width:446px;height:23px;background:#e9f4f4"></div>
<div class="a" style="left:176px;top:332px;width:446px;height:1px;background:#d2e2f3"></div>
<div class="a" style="left:160px;top:310px;width:16px;height:23px;background:linear-gradient(90deg,#a3c4ec,#b7d2f2);border-bottom:1px solid #dce8f7;border-right:1px solid #88acdc"></div>
<div class="a" style="left:301px;top:310px;width:1px;height:23px;background:#d0e1f3"></div>
<div class="a" style="left:388px;top:310px;width:1px;height:23px;background:#d0e1f3"></div>
<div class="a" style="left:464px;top:310px;width:1px;height:23px;background:#d0e1f3"></div>
<div class="a" style="left:494px;top:310px;width:1px;height:23px;background:#d0e1f3"></div>
<div class="a" style="left:594px;top:310px;width:1px;height:23px;background:#d0e1f3"></div>
<div class="a" style="left:622px;top:310px;width:1px;height:23px;background:#d0e1f3"></div>
<div class="t" style="left:179px;top:315px;transform:scaleX(0.897);transform-origin:0 0;color:#000">CARRAPATO</div>
<div class="t" style="left:305px;top:315px;color:#000;letter-spacing:-0.2px">00:30</div>
<div class="t" style="left:388px;top:315px;width:73px;text-align:right;color:#000;letter-spacing:-0.2px">99,00</div>
<div class="t" style="left:464px;top:315px;width:27px;text-align:right;color:#000">0</div>
<div class="t" style="left:497px;top:315px;color:#000;letter-spacing:-0.1px">Não Informado</div>
<div class="a" style="left:598px;top:312px;width:22px;height:19px;border-radius:3px;background:linear-gradient(#90b8f0,#5a8ad6 50%,#3e6cc0);border:1px solid #3050a0"></div>
<svg class="a" style="left:598px;top:312px" width="22" height="19" viewBox="0 0 22 19"><path d="M5 4Q11 6.5 16.5 14" stroke="#c41414" stroke-width="2.3" fill="none" stroke-linecap="round"/><path d="M17.5 4Q9.5 6 5.5 14.5" stroke="#d21c1c" stroke-width="2.6" fill="none" stroke-linecap="round"/></svg>
<div class="a" style="left:176px;top:333px;width:446px;height:23px;background:#fff"></div>
<div class="a" style="left:176px;top:355px;width:446px;height:1px;background:#d2e2f3"></div>
<div class="a" style="left:160px;top:333px;width:16px;height:23px;background:linear-gradient(90deg,#a3c4ec,#b7d2f2);border-bottom:1px solid #dce8f7;border-right:1px solid #88acdc"></div>
<div class="a" style="left:301px;top:333px;width:1px;height:23px;background:#d0e1f3"></div>
<div class="a" style="left:388px;top:333px;width:1px;height:23px;background:#d0e1f3"></div>
<div class="a" style="left:464px;top:333px;width:1px;height:23px;background:#d0e1f3"></div>
<div class="a" style="left:494px;top:333px;width:1px;height:23px;background:#d0e1f3"></div>
<div class="a" style="left:594px;top:333px;width:1px;height:23px;background:#d0e1f3"></div>
<div class="a" style="left:622px;top:333px;width:1px;height:23px;background:#d0e1f3"></div>
<div class="t" style="left:179px;top:338px;transform:scaleX(0.897);transform-origin:0 0;color:#000">CARUNCHO</div>
<div class="t" style="left:305px;top:338px;color:#000;letter-spacing:-0.2px">00:30</div>
<div class="t" style="left:388px;top:338px;width:73px;text-align:right;color:#000;letter-spacing:-0.2px">174,99</div>
<div class="t" style="left:464px;top:338px;width:27px;text-align:right;color:#000">0</div>
<div class="t" style="left:497px;top:338px;color:#000;letter-spacing:-0.1px">Não Informado</div>
<div class="a" style="left:598px;top:335px;width:22px;height:19px;border-radius:3px;background:linear-gradient(#90b8f0,#5a8ad6 50%,#3e6cc0);border:1px solid #3050a0"></div>
<svg class="a" style="left:598px;top:335px" width="22" height="19" viewBox="0 0 22 19"><path d="M5 4Q11 6.5 16.5 14" stroke="#c41414" stroke-width="2.3" fill="none" stroke-linecap="round"/><path d="M17.5 4Q9.5 6 5.5 14.5" stroke="#d21c1c" stroke-width="2.6" fill="none" stroke-linecap="round"/></svg>
<div class="a" style="left:176px;top:356px;width:446px;height:23px;background:#7a96de"></div>
<div class="a" style="left:494px;top:356px;width:100px;height:23px;background:#fff"></div>
<div class="a" style="left:176px;top:378px;width:446px;height:1px;background:#d2e2f3"></div>
<div class="a" style="left:160px;top:356px;width:16px;height:23px;background:linear-gradient(90deg,#a3c4ec,#b7d2f2);border-bottom:1px solid #dce8f7;border-right:1px solid #88acdc"></div>
<div class="a" style="left:301px;top:356px;width:1px;height:23px;background:#d0e1f3"></div>
<div class="a" style="left:388px;top:356px;width:1px;height:23px;background:#d0e1f3"></div>
<div class="a" style="left:464px;top:356px;width:1px;height:23px;background:#d0e1f3"></div>
<div class="a" style="left:494px;top:356px;width:1px;height:23px;background:#d0e1f3"></div>
<div class="a" style="left:594px;top:356px;width:1px;height:23px;background:#d0e1f3"></div>
<div class="a" style="left:622px;top:356px;width:1px;height:23px;background:#d0e1f3"></div>
<div class="t" style="left:179px;top:361px;transform:scaleX(0.897);transform-origin:0 0;color:#fff">CUPIM ARBÓREO</div>
<div class="t" style="left:305px;top:361px;color:#fff;letter-spacing:-0.2px">00:30</div>
<div class="t" style="left:388px;top:361px;width:73px;text-align:right;color:#fff;letter-spacing:-0.2px">0,00</div>
<div class="t" style="left:464px;top:361px;width:27px;text-align:right;color:#fff">0</div>
<div class="t" style="left:497px;top:361px;color:#000;letter-spacing:-0.1px">Não Informado</div>
<div class="a" style="left:598px;top:358px;width:22px;height:19px;border-radius:3px;background:linear-gradient(#90b8f0,#5a8ad6 50%,#3e6cc0);border:1px solid #3050a0"></div>
<svg class="a" style="left:598px;top:358px" width="22" height="19" viewBox="0 0 22 19"><path d="M5 4Q11 6.5 16.5 14" stroke="#c41414" stroke-width="2.3" fill="none" stroke-linecap="round"/><path d="M17.5 4Q9.5 6 5.5 14.5" stroke="#d21c1c" stroke-width="2.6" fill="none" stroke-linecap="round"/></svg>
<svg class="a" style="left:166px;top:364px" width="5" height="8" viewBox="0 0 5 8"><path d="M0 0l5 4-5 4z" fill="#1a2a6a"/></svg>
<div class="a" style="left:579px;top:359px;width:14px;height:17px;border-radius:3px;background:linear-gradient(#9cc0f0,#5b8ad6 50%,#3f6fc4);border:1px solid #3e67b0"></div>
<svg class="a" style="left:579px;top:359px" width="14" height="17" viewBox="0 0 14 17"><path d="M3 7l4 4 4-4" stroke="#fff" stroke-width="2" fill="none"/></svg>
<div class="a" style="left:302px;top:397px;width:90px;height:20px;background:#d4e2f3;border:1px solid #a6c2e6"></div>
<div class="t" style="left:305px;top:401px;color:#a9bfd9;letter-spacing:-0.2px">04:30</div>
<div class="a" style="left:377px;top:398px;width:14px;height:17px;border-radius:3px;background:linear-gradient(#c8dcf4,#a0c0e8);border:1px solid #8aaedc"></div>
<svg class="a" style="left:377px;top:398px" width="14" height="17" viewBox="0 0 14 17"><path d="M3 6l4-3 4 3M3 11l4 3 4-3" stroke="#e8f0fa" stroke-width="1.3" fill="none"/></svg>
<div class="a" style="left:394px;top:397px;width:83px;height:20px;background:#e8f1fc;border:1px solid #a6c2e6"></div>
<div class="t" style="left:397px;top:401px;letter-spacing:-0.2px">413,99</div>
<div class="a" style="left:673px;top:239px;width:533px;height:182px;background:#fff;border:1px solid #8ab2e2"></div>
<div class="a" style="left:674px;top:240px;width:531px;height:180px;border:1px solid #fff"></div>
<div class="a" style="left:675px;top:241px;width:529px;height:24px;background:linear-gradient(90deg,#6a9ed8 0%,#72abe8 30%,#78b4f0 50%,#74afec 70%,#6a9ed8 100%)"></div>
<div class="t" style="left:868px;top:246px;color:#f4f8fd;font-weight:bold;font-size:11px;line-height:14px;letter-spacing:0.35px">Condições de Pagamento</div>
<div class="a" style="left:675px;top:265px;width:529px;height:22px;background:linear-gradient(#9fc1ea,#bad5f3);border-top:1px solid #fff;border-bottom:1px solid #8cb0de"></div>
<div class="a" style="left:675px;top:395px;width:529px;height:24px;background:linear-gradient(#a2c3eb,#bcd6f3);border:1px solid #8ab2e2;border-bottom-color:#8ab2e2"></div>
<div class="a" style="left:676px;top:396px;width:527px;height:1px;background:#f0f6fd"></div>
<div class="a" style="left:675px;top:265px;width:16px;height:22px;background:linear-gradient(#9fc1ea,#bad5f3);border-right:1px solid #88acdc;border-top:1px solid #e8f0fa"></div>
<div class="a" style="left:691px;top:265px;width:1px;height:22px;background:#88acdc"></div>
<div class="a" style="left:773px;top:265px;width:1px;height:22px;background:#88acdc"></div>
<div class="a" style="left:879px;top:265px;width:1px;height:22px;background:#88acdc"></div>
<div class="a" style="left:1019px;top:265px;width:1px;height:22px;background:#88acdc"></div>
<div class="a" style="left:1047px;top:265px;width:1px;height:22px;background:#88acdc"></div>
<div class="t" style="left:696px;top:270px;color:#19227e;letter-spacing:-0.3px">Parcelas</div>
<div class="t" style="left:778px;top:270px;color:#19227e;letter-spacing:-0.3px">Prazo (Dias)</div>
<div class="t" style="left:884px;top:270px;color:#19227e;letter-spacing:-0.3px">% Pagamento</div>
<div class="a" style="left:691px;top:287px;width:356px;height:23px;background:#fff"></div>
<div class="a" style="left:691px;top:287px;width:82px;height:23px;background:#7a96de"></div>
<div class="a" style="left:879px;top:287px;width:140px;height:23px;background:#7a96de"></div>
<div class="a" style="left:691px;top:309px;width:356px;height:1px;background:#d2e2f3"></div>
<div class="a" style="left:675px;top:287px;width:16px;height:23px;background:linear-gradient(90deg,#a3c4ec,#b7d2f2);border-bottom:1px solid #dce8f7;border-right:1px solid #88acdc"></div>
<div class="a" style="left:773px;top:287px;width:1px;height:23px;background:#d0e1f3"></div>
<div class="a" style="left:879px;top:287px;width:1px;height:23px;background:#d0e1f3"></div>
<div class="a" style="left:1019px;top:287px;width:1px;height:23px;background:#d0e1f3"></div>
<div class="a" style="left:1047px;top:287px;width:1px;height:23px;background:#d0e1f3"></div>
<div class="t" style="left:691px;top:292px;width:79px;text-align:right;color:#fff">1</div>
<div class="t" style="left:773px;top:292px;width:102px;text-align:right;color:#000">0</div>
<div class="t" style="left:879px;top:292px;width:137px;text-align:right;color:#fff;letter-spacing:-0.2px">33,33330</div>
<div class="a" style="left:1023px;top:289px;width:22px;height:19px;border-radius:3px;background:linear-gradient(#90b8f0,#5a8ad6 50%,#3e6cc0);border:1px solid #3050a0"></div>
<svg class="a" style="left:1023px;top:289px" width="22" height="19" viewBox="0 0 22 19"><path d="M5 4Q11 6.5 16.5 14" stroke="#c41414" stroke-width="2.3" fill="none" stroke-linecap="round"/><path d="M17.5 4Q9.5 6 5.5 14.5" stroke="#d21c1c" stroke-width="2.6" fill="none" stroke-linecap="round"/></svg>
<svg class="a" style="left:681px;top:295px" width="5" height="8" viewBox="0 0 5 8"><path d="M0 0l5 4-5 4z" fill="#1a2a6a"/></svg>
<div class="a" style="left:691px;top:310px;width:356px;height:23px;background:#e9f4f4"></div>
<div class="a" style="left:691px;top:332px;width:356px;height:1px;background:#d2e2f3"></div>
<div class="a" style="left:675px;top:310px;width:16px;height:23px;background:linear-gradient(90deg,#a3c4ec,#b7d2f2);border-bottom:1px solid #dce8f7;border-right:1px solid #88acdc"></div>
<div class="a" style="left:773px;top:310px;width:1px;height:23px;background:#d0e1f3"></div>
<div class="a" style="left:879px;top:310px;width:1px;height:23px;background:#d0e1f3"></div>
<div class="a" style="left:1019px;top:310px;width:1px;height:23px;background:#d0e1f3"></div>
<div class="a" style="left:1047px;top:310px;width:1px;height:23px;background:#d0e1f3"></div>
<div class="t" style="left:691px;top:315px;width:79px;text-align:right;color:#000">2</div>
<div class="t" style="left:773px;top:315px;width:102px;text-align:right;color:#000">30</div>
<div class="t" style="left:879px;top:315px;width:137px;text-align:right;color:#000;letter-spacing:-0.2px">33,33330</div>
<div class="a" style="left:1023px;top:312px;width:22px;height:19px;border-radius:3px;background:linear-gradient(#90b8f0,#5a8ad6 50%,#3e6cc0);border:1px solid #3050a0"></div>
<svg class="a" style="left:1023px;top:312px" width="22" height="19" viewBox="0 0 22 19"><path d="M5 4Q11 6.5 16.5 14" stroke="#c41414" stroke-width="2.3" fill="none" stroke-linecap="round"/><path d="M17.5 4Q9.5 6 5.5 14.5" stroke="#d21c1c" stroke-width="2.6" fill="none" stroke-linecap="round"/></svg>
<div class="a" style="left:691px;top:333px;width:356px;height:23px;background:#fff"></div>
<div class="a" style="left:691px;top:355px;width:356px;height:1px;background:#d2e2f3"></div>
<div class="a" style="left:675px;top:333px;width:16px;height:23px;background:linear-gradient(90deg,#a3c4ec,#b7d2f2);border-bottom:1px solid #dce8f7;border-right:1px solid #88acdc"></div>
<div class="a" style="left:773px;top:333px;width:1px;height:23px;background:#d0e1f3"></div>
<div class="a" style="left:879px;top:333px;width:1px;height:23px;background:#d0e1f3"></div>
<div class="a" style="left:1019px;top:333px;width:1px;height:23px;background:#d0e1f3"></div>
<div class="a" style="left:1047px;top:333px;width:1px;height:23px;background:#d0e1f3"></div>
<div class="t" style="left:691px;top:338px;width:79px;text-align:right;color:#000">3</div>
<div class="t" style="left:773px;top:338px;width:102px;text-align:right;color:#000">60</div>
<div class="t" style="left:879px;top:338px;width:137px;text-align:right;color:#000;letter-spacing:-0.2px">33,33330</div>
<div class="a" style="left:1023px;top:335px;width:22px;height:19px;border-radius:3px;background:linear-gradient(#90b8f0,#5a8ad6 50%,#3e6cc0);border:1px solid #3050a0"></div>
<svg class="a" style="left:1023px;top:335px" width="22" height="19" viewBox="0 0 22 19"><path d="M5 4Q11 6.5 16.5 14" stroke="#c41414" stroke-width="2.3" fill="none" stroke-linecap="round"/><path d="M17.5 4Q9.5 6 5.5 14.5" stroke="#d21c1c" stroke-width="2.6" fill="none" stroke-linecap="round"/></svg>
<div class="a" style="left:693px;top:398px;width:79px;height:18px;background:linear-gradient(#c2d9f4,#d4e4f7);border:1px solid #9ebfe8;border-top-color:#86aadb"></div>
<div class="t" style="left:693px;top:401px;width:76px;text-align:right;color:#19227e;letter-spacing:-0.2px">Parcelas = 3</div>
<div class="a" style="left:776px;top:398px;width:102px;height:18px;background:linear-gradient(#c2d9f4,#d4e4f7);border:1px solid #9ebfe8;border-top-color:#86aadb"></div>
<div class="t" style="left:776px;top:401px;width:99px;text-align:right;color:#19227e;letter-spacing:-0.2px">Total dias = 90</div>
<div class="a" style="left:880px;top:398px;width:139px;height:18px;background:linear-gradient(#c2d9f4,#d4e4f7);border:1px solid #9ebfe8;border-top-color:#86aadb"></div>
<div class="t" style="left:880px;top:401px;width:136px;text-align:right;color:#19227e;letter-spacing:-0.2px">% total = 99,99990</div>
<div class="a" style="left:221px;top:429px;width:67px;height:20px;background:linear-gradient(#c9def6,#afccef);border:1px solid #8fb3e0;border-bottom:none"></div>
<div class="t" style="left:225px;top:433px;color:#19227e;letter-spacing:-0.1px">Observação</div>
<div class="a" style="left:289px;top:429px;width:109px;height:20px;background:linear-gradient(#c9def6,#afccef);border:1px solid #8fb3e0;border-bottom:none"></div>
<div class="t" style="left:293px;top:433px;color:#19227e;letter-spacing:-0.1px">Documentos Anexos</div>
<div class="a" style="left:399px;top:429px;width:59px;height:20px;background:linear-gradient(#c9def6,#afccef);border:1px solid #8fb3e0;border-bottom:none"></div>
<div class="t" style="left:403px;top:433px;color:#19227e;letter-spacing:-0.1px">Propostas</div>
<div class="a" style="left:158px;top:428px;width:63px;height:21px;border-radius:5px 5px 0 0;background:linear-gradient(#f2f8fe,#e4effb);border:1px solid #a8c6ea;border-bottom:none"></div>
<div class="t" style="left:167px;top:432px;color:#19227e;letter-spacing:-0.3px">Descrição</div>
<div class="a" style="left:157px;top:448px;width:53px;height:0px;"></div>
<div class="a" style="left:157px;top:448px;width:1053px;height:206px;background:#fff;border:2px solid #7aa6dc"></div>
<div class="t" style="left:161px;top:452px;transform:scaleX(0.912);transform-origin:0 0;">SERVIÇO DE DESINSETIZAÇÃO CONTRA BARATAS EM APARTAMENTO DE 03 QUARTOS</div>
<div class="a" style="left:1190px;top:450px;width:18px;height:202px;background:linear-gradient(90deg,#eef5fd,#fbfdff)"></div>
<div class="a" style="left:1190px;top:451px;width:17px;height:17px;border-radius:3px;background:linear-gradient(#d4e6fa,#a9c6ee 60%,#9cbbe8);border:1px solid #9ab8e2"></div>
<svg class="a" style="left:1190px;top:451px" width="17" height="17" viewBox="0 0 17 17"><path d="M4 10l4.5-4.5L13 10" stroke="#e6f0fb" stroke-width="2" fill="none"/></svg>
<div class="a" style="left:1190px;top:634px;width:17px;height:17px;border-radius:3px;background:linear-gradient(#d4e6fa,#a9c6ee 60%,#9cbbe8);border:1px solid #9ab8e2"></div>
<svg class="a" style="left:1190px;top:634px" width="17" height="17" viewBox="0 0 17 17"><path d="M4 6.5l4.5 4.5L13 6.5" stroke="#e6f0fb" stroke-width="2" fill="none"/></svg>
</body></html>
